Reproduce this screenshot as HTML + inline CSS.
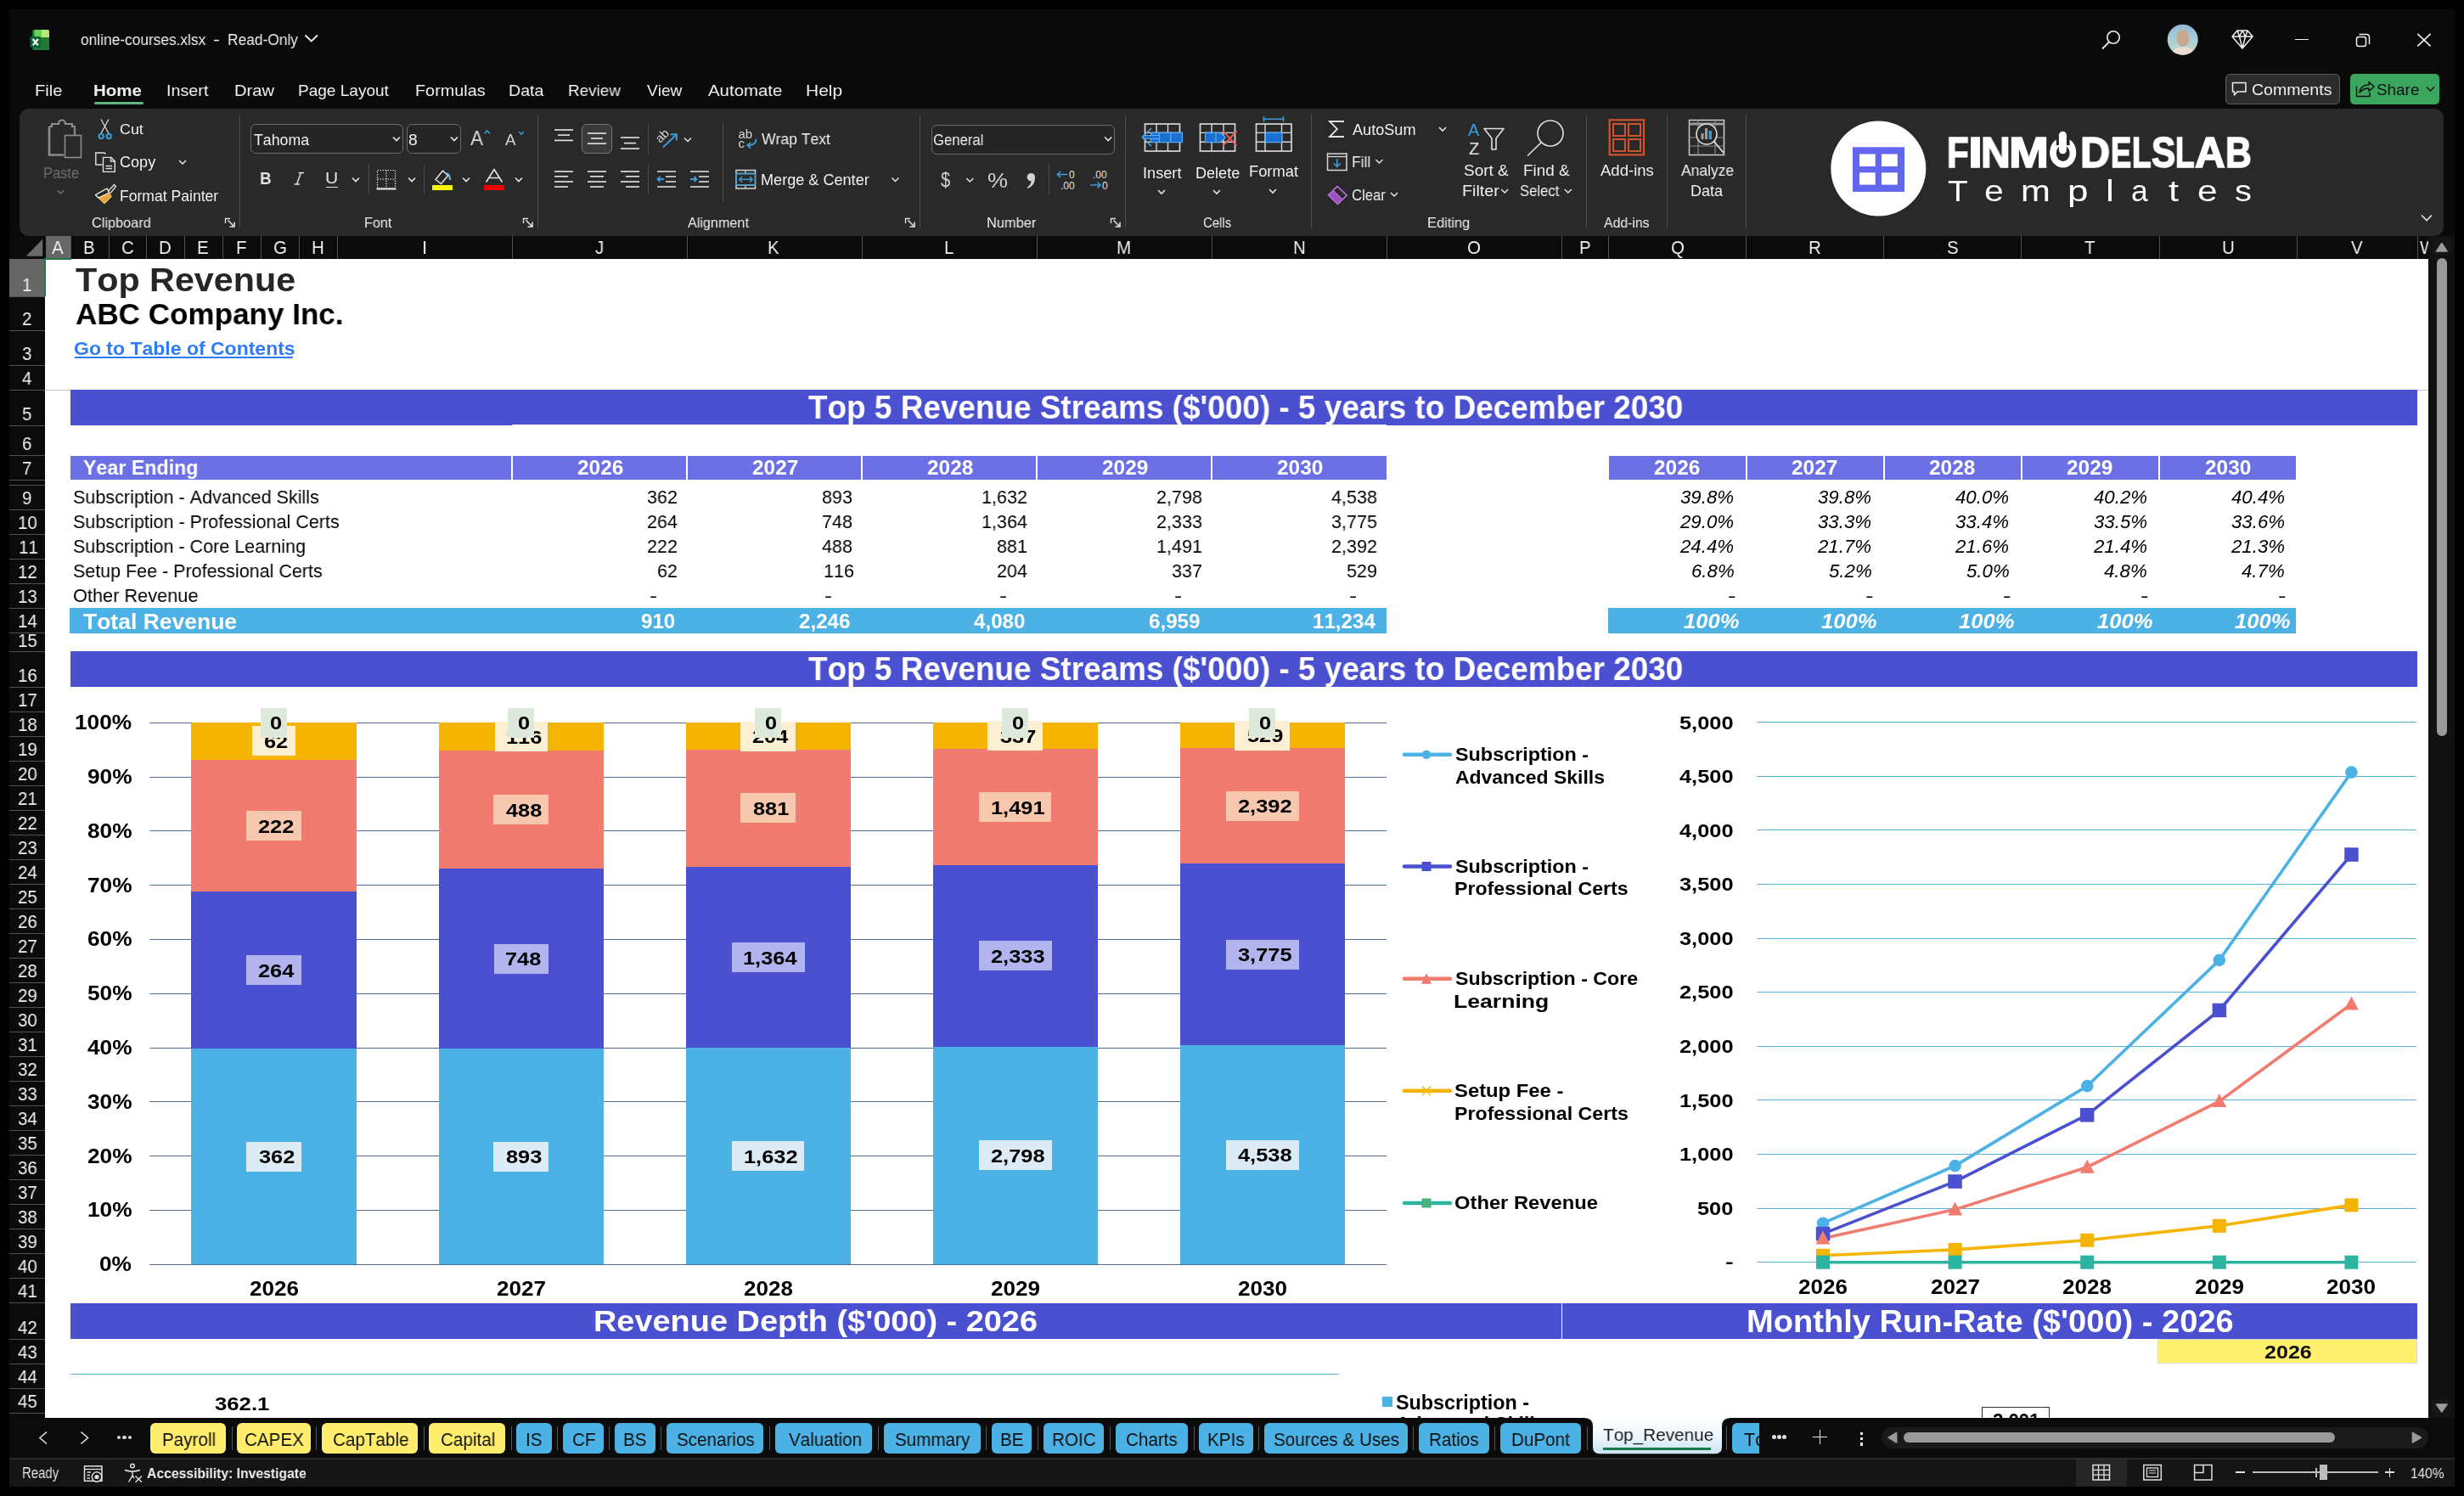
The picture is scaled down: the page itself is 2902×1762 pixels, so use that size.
<!DOCTYPE html>
<html><head><meta charset="utf-8"><style>
html,body{margin:0;padding:0;}
body{width:2902px;height:1762px;overflow:hidden;position:relative;background:#000;font-family:"Liberation Sans",sans-serif;}
.t{position:absolute;white-space:pre;line-height:0;transform-origin:0 0;font-kerning:none;will-change:transform;}
.r{position:absolute;}
.s{position:absolute;overflow:visible;}
</style></head><body>
<div class="r" style="left:11.00px;top:11.00px;width:2880.00px;height:1740.00px;background:#0a0a0a;"></div>
<svg class="s" style="left:33.00px;top:33.00px;" width="28.00" height="28.00" viewBox="33.00 33.00 28.00 28.00">
      <rect x="38" y="35" width="20" height="24" rx="2.5" fill="#1f7a35"/>
      <path d="M40.5 35 H55.5 Q58 35 58 37.5 V44 H40.5 Z" fill="#6ad058"/>
      <path d="M49 35 H55.5 Q58 35 58 37.5 V44 H49 Z" fill="#b9e674"/>
      <rect x="49" y="44" width="9" height="15" fill="#207a32"/>
      <rect x="35.5" y="43" width="12.5" height="13" rx="1.5" fill="#0f6236"/>
      <path d="M38.6 46 L44.9 53.4 M44.9 46 L38.6 53.4" stroke="#fff" stroke-width="2.2"/>
    </svg>
<div class="t" style="left:94.91px;top:46.95px;font-size:18.90px;color:#f0f0f0;transform:scaleX(0.9164);">online-courses.xlsx</div>
<div class="t" style="left:251.43px;top:47.26px;font-size:18.00px;color:#f0f0f0;transform:scaleX(1.3152);">-</div>
<div class="t" style="left:268.11px;top:46.95px;font-size:18.90px;color:#f0f0f0;transform:scaleX(0.9177);">Read-Only</div>
<svg class="s" style="left:355.00px;top:36.00px;" width="23.00" height="16.00" viewBox="355.00 36.00 23.00 16.00"><path d="M359.5 41.5 L366.7 48.5 L374 41.5" fill="none" stroke="#f0f0f0" stroke-width="1.8"/></svg>
<svg class="s" style="left:2470.00px;top:30.00px;" width="30.00" height="32.00" viewBox="2470.00 30.00 30.00 32.00"><circle cx="2489" cy="44" r="7.2" fill="none" stroke="#f0f0f0" stroke-width="1.6"/><path d="M2484 49.3 L2476 57.5" stroke="#f0f0f0" stroke-width="1.8"/></svg>
<svg class="s" style="left:2550.00px;top:26.00px;" width="42.00" height="42.00" viewBox="2550.00 26.00 42.00 42.00">
      <defs><clipPath id="av"><circle cx="2570.7" cy="46.7" r="18"/></clipPath>
      <linearGradient id="avg" x1="0" y1="0" x2="0" y2="1"><stop offset="0" stop-color="#8fb2d8"/><stop offset="0.5" stop-color="#a9cfd6"/><stop offset="1" stop-color="#c9d8d2"/></linearGradient></defs>
      <g clip-path="url(#av)">
        <rect x="2550" y="26" width="42" height="42" fill="url(#avg)"/>
        <ellipse cx="2571" cy="45" rx="7.5" ry="10" fill="#c9a890"/>
        <path d="M2556 68 Q2558 55 2571 55 Q2584 55 2586 68 Z" fill="#e8ddd0"/>
      </g></svg>
<svg class="s" style="left:2626.00px;top:32.00px;" width="30.00" height="28.00" viewBox="2626.00 32.00 30.00 28.00"><path d="M2635 36 H2647 L2653 43 L2641 57 L2629 43 Z M2629 43 H2653 M2637.5 43 L2641 57 L2644.5 43 M2635 36 L2637.5 43 L2641 36 L2644.5 43 L2647 36" fill="none" stroke="#f0f0f0" stroke-width="1.5" stroke-linejoin="round"/></svg>
<div class="r" style="left:2703.00px;top:45.50px;width:16.00px;height:1.70px;background:#f0f0f0;"></div>
<svg class="s" style="left:2770.00px;top:36.00px;" width="26.00" height="24.00" viewBox="2770.00 36.00 26.00 24.00"><rect x="2775.5" y="43.5" width="11" height="11" rx="2.5" fill="none" stroke="#f0f0f0" stroke-width="1.5"/><path d="M2778.5 40.5 H2787 Q2790.5 40.5 2790.5 44 V52" fill="none" stroke="#f0f0f0" stroke-width="1.5"/></svg>
<svg class="s" style="left:2842.00px;top:34.00px;" width="26.00" height="26.00" viewBox="2842.00 34.00 26.00 26.00"><path d="M2847.3 39.8 L2862.6 54.4 M2862.6 39.8 L2847.3 54.4" stroke="#f0f0f0" stroke-width="1.6"/></svg>
<div class="t" style="left:40.58px;top:107.00px;font-size:19.04px;color:#f0f0f0;transform:scaleX(1.0610);">File</div>
<div class="t" style="left:110.27px;top:107.00px;font-size:19.04px;color:#f0f0f0;font-weight:bold;transform:scaleX(1.0759);">Home</div>
<div class="t" style="left:196.22px;top:107.00px;font-size:19.04px;color:#f0f0f0;transform:scaleX(1.0373);">Insert</div>
<div class="t" style="left:275.59px;top:107.00px;font-size:19.04px;color:#f0f0f0;transform:scaleX(1.0574);">Draw</div>
<div class="t" style="left:351.47px;top:107.00px;font-size:19.04px;color:#f0f0f0;">Page Layout</div>
<div class="t" style="left:489.41px;top:107.00px;font-size:19.04px;color:#f0f0f0;transform:scaleX(1.0413);">Formulas</div>
<div class="t" style="left:599.03px;top:107.00px;font-size:19.04px;color:#f0f0f0;transform:scaleX(1.0297);">Data</div>
<div class="t" style="left:669.39px;top:107.00px;font-size:19.04px;color:#f0f0f0;transform:scaleX(0.9913);">Review</div>
<div class="t" style="left:761.70px;top:107.00px;font-size:19.04px;color:#f0f0f0;transform:scaleX(1.0038);">View</div>
<div class="t" style="left:834.00px;top:107.00px;font-size:19.04px;color:#f0f0f0;transform:scaleX(1.0727);">Automate</div>
<div class="t" style="left:949.22px;top:107.00px;font-size:19.04px;color:#f0f0f0;transform:scaleX(1.1019);">Help</div>
<div class="r" style="left:111.00px;top:120.30px;width:58.00px;height:2.70px;background:#5cb883;border-radius:1.5px;"></div>
<div class="r" style="left:2621.00px;top:87.20px;width:134.50px;height:35.50px;background:#2c2c2c;border-radius:5px;box-sizing:border-box;border:1px solid #5c5c5c;"></div>
<svg class="s" style="left:2626.00px;top:92.00px;" width="24.00" height="26.00" viewBox="2626.00 92.00 24.00 26.00"><path d="M2629.5 97.5 H2645 V108 H2635 L2631.5 112 V108 H2629.5 Z" fill="none" stroke="#f0f0f0" stroke-width="1.5" stroke-linejoin="round"/></svg>
<div class="t" style="left:2651.72px;top:105.65px;font-size:18.90px;color:#f0f0f0;transform:scaleX(1.0339);">Comments</div>
<div class="r" style="left:2768.00px;top:87.20px;width:105.00px;height:35.50px;background:#3aa65e;border-radius:5px;"></div>
<svg class="s" style="left:2772.00px;top:92.00px;" width="28.00" height="26.00" viewBox="2772.00 92.00 28.00 26.00"><path d="M2775.5 101.5 V113.5 H2791 V109" fill="none" stroke="#111" stroke-width="1.5"/><path d="M2779 109 Q2780 100 2790 100 V96.5 L2796 102 L2790 107.5 V104 Q2783 104 2779 109 Z" fill="none" stroke="#111" stroke-width="1.5" stroke-linejoin="round"/></svg>
<div class="t" style="left:2798.65px;top:105.65px;font-size:18.90px;color:#111;transform:scaleX(0.9968);">Share</div>
<svg class="s" style="left:2855.00px;top:98.00px;" width="16.00" height="14.00" viewBox="2855.00 98.00 16.00 14.00"><path d="M2858 102.5 L2862.5 107 L2867 102.5" fill="none" stroke="#111" stroke-width="1.5"/></svg>
<div class="r" style="left:23.00px;top:128.00px;width:2855.00px;height:150.20px;background:#292929;border-radius:11px;"></div>
<div class="r" style="left:281.90px;top:135.00px;width:1.20px;height:132.50px;background:#4d4d4d;"></div>
<div class="r" style="left:633.20px;top:135.00px;width:1.20px;height:133.00px;background:#4d4d4d;"></div>
<div class="r" style="left:1082.50px;top:135.70px;width:1.20px;height:132.30px;background:#4d4d4d;"></div>
<div class="r" style="left:1325.00px;top:135.00px;width:1.20px;height:133.00px;background:#4d4d4d;"></div>
<div class="r" style="left:1544.10px;top:135.00px;width:1.20px;height:133.00px;background:#4d4d4d;"></div>
<div class="r" style="left:1868.20px;top:135.00px;width:1.20px;height:133.00px;background:#4d4d4d;"></div>
<div class="r" style="left:1962.90px;top:135.00px;width:1.20px;height:133.00px;background:#4d4d4d;"></div>
<div class="r" style="left:2056.00px;top:135.00px;width:1.20px;height:133.00px;background:#4d4d4d;"></div>
<div class="r" style="left:433.50px;top:194.00px;width:1.10px;height:35.00px;background:#4d4d4d;"></div>
<div class="r" style="left:498.90px;top:194.00px;width:1.10px;height:35.00px;background:#4d4d4d;"></div>
<div class="r" style="left:763.00px;top:146.00px;width:1.10px;height:35.50px;background:#4d4d4d;"></div>
<div class="r" style="left:763.00px;top:194.00px;width:1.10px;height:35.00px;background:#4d4d4d;"></div>
<div class="r" style="left:850.70px;top:144.00px;width:1.10px;height:93.80px;background:#4d4d4d;"></div>
<div class="r" style="left:1235.00px;top:193.00px;width:1.10px;height:37.00px;background:#4d4d4d;"></div>
<div class="t" style="left:108.48px;top:263.20px;font-size:16.72px;color:#f0f0f0;transform:scaleX(0.9753);">Clipboard</div>
<div class="t" style="left:428.70px;top:263.20px;font-size:16.72px;color:#f0f0f0;transform:scaleX(0.9684);">Font</div>
<div class="t" style="left:810.00px;top:263.20px;font-size:16.72px;color:#f0f0f0;transform:scaleX(0.9674);">Alignment</div>
<div class="t" style="left:1162.08px;top:263.20px;font-size:16.72px;color:#f0f0f0;transform:scaleX(0.9838);">Number</div>
<div class="t" style="left:1417.25px;top:263.20px;font-size:16.72px;color:#f0f0f0;transform:scaleX(0.8946);">Cells</div>
<div class="t" style="left:1681.09px;top:263.20px;font-size:16.72px;color:#f0f0f0;transform:scaleX(0.9827);">Editing</div>
<div class="t" style="left:1888.50px;top:263.20px;font-size:16.72px;color:#f0f0f0;transform:scaleX(0.9451);">Add-ins</div>
<svg class="s" style="left:264.00px;top:256.00px;" width="14.00" height="14.00" viewBox="264.00 256.00 14.00 14.00"><path d="M265.5 263 V257.5 H271.0" fill="none" stroke="#e0e0e0" stroke-width="1.4"/><path d="M268.5 259.5 L276.0 267 M270.5 267 H276.0 V261.5" fill="none" stroke="#e0e0e0" stroke-width="1.6"/></svg>
<svg class="s" style="left:615.00px;top:256.00px;" width="14.00" height="14.00" viewBox="615.00 256.00 14.00 14.00"><path d="M616.5 263 V257.5 H622.0" fill="none" stroke="#e0e0e0" stroke-width="1.4"/><path d="M619.5 259.5 L627.0 267 M621.5 267 H627.0 V261.5" fill="none" stroke="#e0e0e0" stroke-width="1.6"/></svg>
<svg class="s" style="left:1065.00px;top:256.00px;" width="14.00" height="14.00" viewBox="1065.00 256.00 14.00 14.00"><path d="M1066.5 263 V257.5 H1072.0" fill="none" stroke="#e0e0e0" stroke-width="1.4"/><path d="M1069.5 259.5 L1077.0 267 M1071.5 267 H1077.0 V261.5" fill="none" stroke="#e0e0e0" stroke-width="1.6"/></svg>
<svg class="s" style="left:1307.00px;top:256.00px;" width="14.00" height="14.00" viewBox="1307.00 256.00 14.00 14.00"><path d="M1308.5 263 V257.5 H1314.0" fill="none" stroke="#e0e0e0" stroke-width="1.4"/><path d="M1311.5 259.5 L1319.0 267 M1313.5 267 H1319.0 V261.5" fill="none" stroke="#e0e0e0" stroke-width="1.6"/></svg>
<svg class="s" style="left:50.00px;top:136.00px;" width="50.00" height="54.00" viewBox="50.00 136.00 50.00 54.00">
      <path d="M58 149 H61 V146 H69 Q69 141.5 73 141.5 Q77 141.5 77 146 H85 V149 H88 V160" fill="none" stroke="#8c8c8c" stroke-width="2.2"/>
      <path d="M58 149 V182.5 H75" fill="none" stroke="#8c8c8c" stroke-width="2.6"/>
      <rect x="76.5" y="159.5" width="19" height="26" fill="none" stroke="#8c8c8c" stroke-width="1.6"/></svg>
<div class="t" style="left:50.98px;top:203.85px;font-size:17.44px;color:#707070;transform:scaleX(0.9437);">Paste</div>
<svg class="s" style="left:64.00px;top:221.00px;" width="16.00" height="11.00" viewBox="64.00 221.00 16.00 11.00"><path d="M67.5 224 L71.5 228 L75.5 224" fill="none" stroke="#707070" stroke-width="1.5"/></svg>
<svg class="s" style="left:112.00px;top:138.00px;" width="24.00" height="28.00" viewBox="112.00 138.00 24.00 28.00"><path d="M119 140.5 L128.5 158 M128 140.5 L118.5 158" stroke="#e6e6e6" stroke-width="1.2"/>
      <circle cx="119.2" cy="160.5" r="2.7" fill="none" stroke="#3c9ad8" stroke-width="2"/><circle cx="128.2" cy="160.5" r="2.7" fill="none" stroke="#3c9ad8" stroke-width="2"/></svg>
<div class="t" style="left:141.31px;top:153.10px;font-size:17.01px;color:#f0f0f0;transform:scaleX(1.0506);">Cut</div>
<svg class="s" style="left:110.00px;top:177.00px;" width="28.00" height="28.00" viewBox="110.00 177.00 28.00 28.00"><path d="M120.5 194 H112.8 V180 H123 L124.5 181.5" fill="none" stroke="#e0e0e0" stroke-width="1.4"/>
      <path d="M121.5 202.4 V185.4 H131 L135.3 189.7 V202.4 Z M130.5 185.4 V190 H135.3" fill="none" stroke="#e0e0e0" stroke-width="1.4"/>
      <path d="M124.5 195.5 H132 M124.5 198.5 H132" stroke="#e0e0e0" stroke-width="1.3"/></svg>
<div class="t" style="left:141.30px;top:191.25px;font-size:17.44px;color:#f0f0f0;transform:scaleX(1.0362);">Copy</div>
<svg class="s" style="left:208.00px;top:185.00px;" width="14.00" height="12.00" viewBox="208.00 185.00 14.00 12.00"><path d="M211 189 L215 193 L219 189" fill="none" stroke="#e6e6e6" stroke-width="1.5"/></svg>
<svg class="s" style="left:110.00px;top:215.00px;" width="30.00" height="28.00" viewBox="110.00 215.00 30.00 28.00"><path d="M112.5 229.5 L126 222 L131 231.5 L123 239.5 Z" fill="#e9a43a" stroke="#f0c060" stroke-width="1.3" stroke-linejoin="round"/>
      <path d="M112.5 229.5 L126 222 L128.5 227 L116 233 Z" fill="#292929" stroke="#f0f0f0" stroke-width="1.3" stroke-linejoin="round"/>
      <path d="M127.5 225 L134.5 217.5 L136.5 219.5 L130 227.5" fill="none" stroke="#e0e0e0" stroke-width="1.3"/></svg>
<div class="t" style="left:141.29px;top:230.75px;font-size:17.44px;color:#f0f0f0;transform:scaleX(1.0076);">Format Painter</div>
<div class="r" style="left:295.30px;top:146.20px;width:179.90px;height:34.90px;background:#252525;border-radius:6px;box-sizing:border-box;border:1px solid #6a6a6a;"></div>
<div class="t" style="left:298.65px;top:165.15px;font-size:17.73px;color:#f0f0f0;">Tahoma</div>
<div class="r" style="left:479.00px;top:146.20px;width:64.00px;height:34.90px;background:#252525;border-radius:6px;box-sizing:border-box;border:1px solid #6a6a6a;"></div>
<div class="t" style="left:481.14px;top:165.15px;font-size:17.73px;color:#f0f0f0;transform:scaleX(1.0799);">8</div>
<svg class="s" style="left:460.30px;top:158.00px;" width="14.00" height="12.00" viewBox="460.30 158.00 14.00 12.00"><path d="M463.3 161.5 L467.3 165.5 L471.3 161.5" fill="none" stroke="#e6e6e6" stroke-width="1.6"/></svg>
<svg class="s" style="left:528.00px;top:158.00px;" width="14.00" height="12.00" viewBox="528.00 158.00 14.00 12.00"><path d="M531.0 161.5 L535.0 165.5 L539.0 161.5" fill="none" stroke="#e6e6e6" stroke-width="1.6"/></svg>
<div class="t" style="left:554.40px;top:162.99px;font-size:23.98px;color:#d8d8d8;transform:scaleX(0.9468);">A</div>
<svg class="s" style="left:568.00px;top:152.00px;" width="12.00" height="8.00" viewBox="568.00 152.00 12.00 8.00"><path d="M570.5 157.5 L573.8 154 L577 157.5" fill="none" stroke="#3c9ad8" stroke-width="1.6"/></svg>
<div class="t" style="left:595.00px;top:165.20px;font-size:18.17px;color:#d8d8d8;transform:scaleX(1.0346);">A</div>
<svg class="s" style="left:609.00px;top:153.00px;" width="11.00" height="7.00" viewBox="609.00 153.00 11.00 7.00"><path d="M611 155 L614 158 L617 155" fill="none" stroke="#3c9ad8" stroke-width="1.6"/></svg>
<div class="t" style="left:306.27px;top:210.39px;font-size:20.79px;color:#e0e0e0;font-weight:bold;transform:scaleX(0.9070);">B</div>
<svg class="s" style="left:344.00px;top:200.00px;" width="18.00" height="20.00" viewBox="344.00 200.00 18.00 20.00"><path d="M354.5 203.5 L349.5 217 M351.5 203.5 H358 M346.5 217 H353" fill="none" stroke="#e0e0e0" stroke-width="1.5"/></svg>
<div class="t" style="left:382.92px;top:209.55px;font-size:18.60px;color:#e0e0e0;transform:scaleX(1.1316);">U</div>
<div class="r" style="left:383.50px;top:219.50px;width:14.00px;height:1.70px;background:#e0e0e0;"></div>
<svg class="s" style="left:412.20px;top:206.00px;" width="14.00" height="12.00" viewBox="412.20 206.00 14.00 12.00"><path d="M415.2 209.5 L419.2 213.5 L423.2 209.5" fill="none" stroke="#e6e6e6" stroke-width="1.6"/></svg>
<svg class="s" style="left:477.50px;top:206.00px;" width="14.00" height="12.00" viewBox="477.50 206.00 14.00 12.00"><path d="M480.5 209.5 L484.5 213.5 L488.5 209.5" fill="none" stroke="#e6e6e6" stroke-width="1.6"/></svg>
<svg class="s" style="left:542.00px;top:206.00px;" width="14.00" height="12.00" viewBox="542.00 206.00 14.00 12.00"><path d="M545.0 209.5 L549.0 213.5 L553.0 209.5" fill="none" stroke="#e6e6e6" stroke-width="1.6"/></svg>
<svg class="s" style="left:603.70px;top:206.00px;" width="14.00" height="12.00" viewBox="603.70 206.00 14.00 12.00"><path d="M606.7 209.5 L610.7 213.5 L614.7 209.5" fill="none" stroke="#e6e6e6" stroke-width="1.6"/></svg>
<svg class="s" style="left:440.00px;top:197.00px;" width="30.00" height="29.00" viewBox="440.00 197.00 30.00 29.00"><rect x="444.5" y="200.5" width="21" height="21" fill="none" stroke="#e0e0e0" stroke-width="1.2" stroke-dasharray="1.5 1.5"/><path d="M444.5 211 H465.5 M455 200.5 V221.5" stroke="#e0e0e0" stroke-width="1.2" stroke-dasharray="1.5 1.5"/><path d="M443.5 222.5 H466.5" stroke="#e6e6e6" stroke-width="2"/></svg>
<svg class="s" style="left:505.00px;top:197.00px;" width="32.00" height="29.00" viewBox="505.00 197.00 32.00 29.00"><path d="M513 211.5 L521.5 201 L527.5 207 L519.5 216.5 Z" fill="none" stroke="#e0e0e0" stroke-width="1.5" stroke-linejoin="round"/><path d="M524 204 Q530 204 530 212" fill="none" stroke="#7eb6e6" stroke-width="2"/></svg>
<div class="r" style="left:509.00px;top:217.80px;width:24.00px;height:5.90px;background:#f5f500;"></div>
<svg class="s" style="left:566.00px;top:196.00px;" width="32.00" height="22.00" viewBox="566.00 196.00 32.00 22.00"><path d="M572.5 214.5 L582 199.5 L591.5 214.5 M575.5 209.5 H588.5" fill="none" stroke="#e0e0e0" stroke-width="1.6" stroke-linejoin="round"/></svg>
<div class="r" style="left:569.80px;top:217.80px;width:24.20px;height:5.90px;background:#ee0000;"></div>
<svg class="s" style="left:648.00px;top:149.50px;" width="42.00" height="18.40" viewBox="648.00 149.50 42.00 18.40"><path d="M653.0 152.5 H675.0" stroke="#e6e6e6" stroke-width="1.6"/><path d="M657.0 158.6 H671.0" stroke="#e6e6e6" stroke-width="1.6"/><path d="M653.0 164.9 H675.0" stroke="#e6e6e6" stroke-width="1.6"/></svg>
<div class="r" style="left:685.30px;top:146.20px;width:35.30px;height:35.30px;background:#3a3a3a;border-radius:6px;box-sizing:border-box;border:1px solid #777;"></div>
<svg class="s" style="left:688.00px;top:154.00px;" width="42.00" height="18.10" viewBox="688.00 154.00 42.00 18.10"><path d="M692.0 157.0 H714.0" stroke="#e6e6e6" stroke-width="1.6"/><path d="M696.0 163.0 H710.0" stroke="#e6e6e6" stroke-width="1.6"/><path d="M692.0 169.1 H714.0" stroke="#e6e6e6" stroke-width="1.6"/></svg>
<svg class="s" style="left:727.00px;top:159.40px;" width="42.00" height="19.00" viewBox="727.00 159.40 42.00 19.00"><path d="M731.0 162.4 H753.0" stroke="#e6e6e6" stroke-width="1.6"/><path d="M735.0 169.0 H749.0" stroke="#e6e6e6" stroke-width="1.6"/><path d="M731.0 175.4 H753.0" stroke="#e6e6e6" stroke-width="1.6"/></svg>
<svg class="s" style="left:648.00px;top:199.00px;" width="42.00" height="24.00" viewBox="648.00 199.00 42.00 24.00"><path d="M653.0 202.0 H675.0" stroke="#e6e6e6" stroke-width="1.6"/><path d="M653.0 207.8 H669.0" stroke="#e6e6e6" stroke-width="1.6"/><path d="M653.0 214.0 H675.0" stroke="#e6e6e6" stroke-width="1.6"/><path d="M653.0 220.0 H669.0" stroke="#e6e6e6" stroke-width="1.6"/></svg>
<svg class="s" style="left:687.00px;top:199.00px;" width="42.00" height="24.00" viewBox="687.00 199.00 42.00 24.00"><path d="M692.0 202.0 H714.0" stroke="#e6e6e6" stroke-width="1.6"/><path d="M695.0 207.8 H711.0" stroke="#e6e6e6" stroke-width="1.6"/><path d="M692.0 214.0 H714.0" stroke="#e6e6e6" stroke-width="1.6"/><path d="M695.0 220.0 H711.0" stroke="#e6e6e6" stroke-width="1.6"/></svg>
<svg class="s" style="left:727.00px;top:199.00px;" width="42.00" height="24.00" viewBox="727.00 199.00 42.00 24.00"><path d="M731.0 202.0 H753.0" stroke="#e6e6e6" stroke-width="1.6"/><path d="M737.0 207.8 H753.0" stroke="#e6e6e6" stroke-width="1.6"/><path d="M731.0 214.0 H753.0" stroke="#e6e6e6" stroke-width="1.6"/><path d="M737.0 220.0 H753.0" stroke="#e6e6e6" stroke-width="1.6"/></svg>
<svg class="s" style="left:770.00px;top:196.00px;" width="62.00" height="30.00" viewBox="770.00 196.00 62.00 30.00"><path d="M774 202 H796 M784 208 H796 M784 214 H796 M774 220 H796" stroke="#e6e6e6" stroke-width="1.6"/>
      <path d="M782 211 H774.5 M777.5 208 L774.5 211 L777.5 214" fill="none" stroke="#3c9ad8" stroke-width="1.8"/>
      <path d="M813 202 H835 M823 208 H835 M823 214 H835 M813 220 H835" stroke="#e6e6e6" stroke-width="1.6"/>
      <path d="M813 211 H820.5 M817.5 208 L820.5 211 L817.5 214" fill="none" stroke="#3c9ad8" stroke-width="1.8"/></svg>
<svg class="s" style="left:766.00px;top:144.00px;" width="54.00" height="38.00" viewBox="766.00 144.00 54.00 38.00"><text x="771" y="163.5" font-size="14.5" fill="#d8d8d8" transform="rotate(-45 781 158.5)" font-family="Liberation Sans">ab</text>
      <path d="M781 173.5 L796.5 158.5 M789.5 158.3 H796.8 V165.5" fill="none" stroke="#3c9ad8" stroke-width="1.9"/>
      <path d="M806 162.5 L810 166.5 L814 162.5" fill="none" stroke="#e6e6e6" stroke-width="1.5"/></svg>
<svg class="s" style="left:864.00px;top:146.00px;" width="32.00" height="34.00" viewBox="864.00 146.00 32.00 34.00"><text x="869.5" y="163.3" font-size="15" fill="#d8d8d8" font-family="Liberation Sans">ab</text>
      <text x="869.5" y="174.3" font-size="15" fill="#d8d8d8" font-family="Liberation Sans">c</text>
      <path d="M890.5 163.5 Q891 171.2 880.5 171.2 M884 167.8 L880.2 171.2 L884 174.6" fill="none" stroke="#3c9ad8" stroke-width="1.8"/></svg>
<div class="t" style="left:896.91px;top:164.35px;font-size:18.02px;color:#f0f0f0;transform:scaleX(0.9750);">Wrap Text</div>
<svg class="s" style="left:864.00px;top:198.00px;" width="28.00" height="27.00" viewBox="864.00 198.00 28.00 27.00"><rect x="867" y="200.5" width="22.5" height="21.5" fill="none" stroke="#d8d8d8" stroke-width="1.5"/>
      <path d="M867 204.5 H889.5 M867 218 H889.5 M878 200.5 V204.5 M878 218 V222" stroke="#d8d8d8" stroke-width="1.3"/>
      <rect x="867" y="204.5" width="22.5" height="13.5" fill="none" stroke="#3c9ad8" stroke-width="1.5"/>
      <path d="M871 211.2 H886 M874 208 L871 211.2 L874 214.5 M883 208 L886 211.2 L883 214.5" fill="none" stroke="#3c9ad8" stroke-width="1.6"/></svg>
<div class="t" style="left:895.55px;top:212.45px;font-size:18.02px;color:#f0f0f0;transform:scaleX(1.0044);">Merge &amp; Center</div>
<svg class="s" style="left:1047.00px;top:206.00px;" width="14.00" height="12.00" viewBox="1047.00 206.00 14.00 12.00"><path d="M1050.4 209.5 L1054.4 213.5 L1058.4 209.5" fill="none" stroke="#e6e6e6" stroke-width="1.5"/></svg>
<div class="r" style="left:1096.60px;top:146.60px;width:216.80px;height:35.00px;background:#252525;border-radius:6px;box-sizing:border-box;border:1px solid #6a6a6a;"></div>
<div class="t" style="left:1099.16px;top:165.25px;font-size:18.02px;color:#f0f0f0;transform:scaleX(0.9274);">General</div>
<svg class="s" style="left:1298.00px;top:158.00px;" width="14.00" height="12.00" viewBox="1298.00 158.00 14.00 12.00"><path d="M1301.2 161.5 L1305.2 165.5 L1309.2 161.5" fill="none" stroke="#e6e6e6" stroke-width="1.6"/></svg>
<div class="t" style="left:1107.60px;top:212.19px;font-size:23.98px;color:#d0d0d0;transform:scaleX(0.8418);">$</div>
<svg class="s" style="left:1135.00px;top:206.00px;" width="15.00" height="12.00" viewBox="1135.00 206.00 15.00 12.00"><path d="M1138.3 210 L1142.3 214 L1146.3 210" fill="none" stroke="#e6e6e6" stroke-width="1.5"/></svg>
<div class="t" style="left:1162.85px;top:212.69px;font-size:23.98px;color:#d0d0d0;transform:scaleX(1.1288);">%</div>
<svg class="s" style="left:1204.00px;top:198.00px;" width="22.00" height="28.00" viewBox="1204.00 198.00 22.00 28.00"><circle cx="1214.3" cy="208.6" r="4.7" fill="#d4d4d4"/><path d="M1218.9 209.2 Q1219.2 218.5 1210.2 222 L1209.6 220.8 Q1214.6 217.5 1214.6 212.8 Z" fill="#d4d4d4"/></svg>
<svg class="s" style="left:1240.00px;top:196.00px;" width="72.00" height="32.00" viewBox="1240.00 196.00 72.00 32.00"><text x="1259" y="210" font-size="12" fill="#e0e0e0" font-family="Liberation Sans">0</text>
      <text x="1249" y="222.5" font-size="12" fill="#e0e0e0" font-family="Liberation Sans">.00</text>
      <path d="M1257 205.5 H1245.5 M1249 202 L1245.5 205.5 L1249 209" fill="none" stroke="#3c9ad8" stroke-width="1.6"/>
      <text x="1287" y="210" font-size="12" fill="#e0e0e0" font-family="Liberation Sans">.00</text>
      <text x="1298" y="222.5" font-size="12" fill="#e0e0e0" font-family="Liberation Sans">0</text>
      <path d="M1284 218 H1296 M1292.5 214.5 L1296 218 L1292.5 221.5" fill="none" stroke="#3c9ad8" stroke-width="1.6"/></svg>
<svg class="s" style="left:1340.00px;top:134.00px;" width="190.00" height="48.00" viewBox="1340.00 134.00 190.00 48.00"><rect x="1348.5" y="146.0" width="41.0" height="32.0" fill="none" stroke="#d8d8d8" stroke-width="1.7"/><path d="M1362.0 146.0 V178.0" stroke="#d8d8d8" stroke-width="1.4"/><path d="M1375.5 146.0 V178.0" stroke="#d8d8d8" stroke-width="1.4"/><path d="M1348.5 156.4 H1389.5" stroke="#d8d8d8" stroke-width="1.4"/><path d="M1348.5 167.3 H1389.5" stroke="#d8d8d8" stroke-width="1.4"/><rect x="1355.5" y="156.2" width="37" height="11.4" fill="#1a6fd0" stroke="#5aaef0" stroke-width="1.2"/><path d="M1365.4 156.2 V167.6 M1378.8 156.2 V167.6" stroke="#5aaef0" stroke-width="1.2"/><path d="M1356 151 L1345.3 161.5 L1356 172 M1346 159.6 H1365 M1346 163.4 H1365" fill="none" stroke="#5aaef0" stroke-width="1.4"/><path d="M1348 161.5 H1365" stroke="#1a6fd0" stroke-width="2.6"/><rect x="1413.5" y="146.0" width="41.0" height="32.0" fill="none" stroke="#d8d8d8" stroke-width="1.7"/><path d="M1427.0 146.0 V178.0" stroke="#d8d8d8" stroke-width="1.4"/><path d="M1441.0 146.0 V178.0" stroke="#d8d8d8" stroke-width="1.4"/><path d="M1413.5 156.4 H1454.5" stroke="#d8d8d8" stroke-width="1.4"/><path d="M1413.5 167.3 H1454.5" stroke="#d8d8d8" stroke-width="1.4"/><path d="M1419.5 156.2 H1437 L1443.5 161.9 L1437 167.6 H1419.5 Z" fill="#1a6fd0" stroke="#5aaef0" stroke-width="1.2"/><path d="M1432 156.2 V167.6" stroke="#5aaef0" stroke-width="1.2"/><path d="M1440.5 154.5 L1456.5 171.5 M1456.5 154.5 L1440.5 171.5" stroke="#e85a5a" stroke-width="2"/><rect x="1479.5" y="146.0" width="41.5" height="32.0" fill="none" stroke="#d8d8d8" stroke-width="1.7"/><path d="M1490.0 146.0 V178.0" stroke="#d8d8d8" stroke-width="1.4"/><path d="M1509.5 146.0 V178.0" stroke="#d8d8d8" stroke-width="1.4"/><path d="M1479.5 156.4 H1521.0" stroke="#d8d8d8" stroke-width="1.4"/><path d="M1479.5 167.3 H1521.0" stroke="#d8d8d8" stroke-width="1.4"/><rect x="1490.5" y="156.2" width="19.5" height="11.4" fill="#1a6fd0" stroke="#5aaef0" stroke-width="1.2"/><path d="M1488.5 140.2 H1511.5 M1488.5 137 V143.5 M1511.5 137 V143.5" stroke="#3c9ad8" stroke-width="1.6"/></svg>
<div class="t" style="left:1345.66px;top:203.75px;font-size:18.02px;color:#f0f0f0;transform:scaleX(1.0082);">Insert</div>
<div class="t" style="left:1407.55px;top:203.75px;font-size:18.02px;color:#f0f0f0;transform:scaleX(1.0033);">Delete</div>
<div class="t" style="left:1471.14px;top:201.75px;font-size:18.02px;color:#f0f0f0;transform:scaleX(1.0160);">Format</div>
<svg class="s" style="left:1361.30px;top:220.40px;" width="14.00" height="12.00" viewBox="1361.30 220.40 14.00 12.00"><path d="M1364.3 224.4 L1368.3 228.4 L1372.3 224.4" fill="none" stroke="#e6e6e6" stroke-width="1.6"/></svg>
<svg class="s" style="left:1426.00px;top:220.40px;" width="14.00" height="12.00" viewBox="1426.00 220.40 14.00 12.00"><path d="M1429.0 224.4 L1433.0 228.4 L1437.0 224.4" fill="none" stroke="#e6e6e6" stroke-width="1.6"/></svg>
<svg class="s" style="left:1492.20px;top:218.50px;" width="14.00" height="12.00" viewBox="1492.20 218.50 14.00 12.00"><path d="M1495.2 222.5 L1499.2 226.5 L1503.2 222.5" fill="none" stroke="#e6e6e6" stroke-width="1.6"/></svg>
<svg class="s" style="left:1560.00px;top:138.00px;" width="30.00" height="28.00" viewBox="1560.00 138.00 30.00 28.00"><path d="M1583 143 H1566 L1575 152 L1566 161 H1583" fill="none" stroke="#e0e0e0" stroke-width="1.8" stroke-linejoin="miter"/></svg>
<div class="t" style="left:1593.30px;top:152.75px;font-size:18.02px;color:#f0f0f0;transform:scaleX(1.0055);">AutoSum</div>
<svg class="s" style="left:1692.00px;top:146.00px;" width="14.00" height="12.00" viewBox="1692.00 146.00 14.00 12.00"><path d="M1695 150 L1699 154 L1703 150" fill="none" stroke="#e6e6e6" stroke-width="1.6"/></svg>
<svg class="s" style="left:1560.00px;top:177.00px;" width="30.00" height="27.00" viewBox="1560.00 177.00 30.00 27.00"><rect x="1563.5" y="181" width="22.5" height="19.5" fill="none" stroke="#d8d8d8" stroke-width="1.5"/><path d="M1563.5 184.5 H1586" stroke="#d8d8d8" stroke-width="1.3"/><path d="M1574.8 187 V196 M1571 192.5 L1574.8 196.3 L1578.6 192.5" fill="none" stroke="#3c9ad8" stroke-width="1.7"/></svg>
<div class="t" style="left:1591.91px;top:191.25px;font-size:18.02px;color:#f0f0f0;transform:scaleX(0.9673);">Fill</div>
<svg class="s" style="left:1617.00px;top:184.00px;" width="15.00" height="12.00" viewBox="1617.00 184.00 15.00 12.00"><path d="M1620.4 188 L1624.4 192 L1628.4 188" fill="none" stroke="#e6e6e6" stroke-width="1.5"/></svg>
<svg class="s" style="left:1560.00px;top:216.00px;" width="32.00" height="28.00" viewBox="1560.00 216.00 32.00 28.00"><path d="M1575 219.5 L1586 230 L1575.5 240.5 L1564.5 229.8 Z" fill="#9b4fc2" stroke="#c070e0" stroke-width="1.5" stroke-linejoin="round"/><path d="M1570 224.5 L1581 235.2" stroke="#292929" stroke-width="1.2"/><path d="M1575 219.5 L1586 230 L1581 235 L1570 224.5 Z" fill="#292929" stroke="#c070e0" stroke-width="1.5" stroke-linejoin="round"/></svg>
<div class="t" style="left:1592.47px;top:230.05px;font-size:18.02px;color:#f0f0f0;transform:scaleX(0.9255);">Clear</div>
<svg class="s" style="left:1635.00px;top:223.00px;" width="15.00" height="12.00" viewBox="1635.00 223.00 15.00 12.00"><path d="M1638 227 L1642 231 L1646 227" fill="none" stroke="#e6e6e6" stroke-width="1.5"/></svg>
<svg class="s" style="left:1725.00px;top:138.00px;" width="50.00" height="47.00" viewBox="1725.00 138.00 50.00 47.00"><text x="1729" y="160" font-size="20" fill="#3c9ad8" font-family="Liberation Sans">A</text>
      <text x="1730" y="181.5" font-size="20" fill="#e0e0e0" font-family="Liberation Sans">Z</text>
      <path d="M1748 151.5 H1771 L1762 163 V176 H1757 V163 Z" fill="none" stroke="#e0e0e0" stroke-width="1.6" stroke-linejoin="round"/></svg>
<div class="t" style="left:1724.35px;top:200.75px;font-size:18.02px;color:#f0f0f0;transform:scaleX(1.0524);">Sort &amp;</div>
<div class="t" style="left:1722.42px;top:224.95px;font-size:18.02px;color:#f0f0f0;transform:scaleX(1.0966);">Filter</div>
<svg class="s" style="left:1765.00px;top:219.00px;" width="15.00" height="12.00" viewBox="1765.00 219.00 15.00 12.00"><path d="M1768.2 223 L1772.2 227 L1776.2 223" fill="none" stroke="#e6e6e6" stroke-width="1.5"/></svg>
<svg class="s" style="left:1795.00px;top:138.00px;" width="53.00" height="48.00" viewBox="1795.00 138.00 53.00 48.00"><circle cx="1826" cy="157" r="15" fill="none" stroke="#e0e0e0" stroke-width="1.6"/><path d="M1815.5 167.5 L1799 183.5" stroke="#e0e0e0" stroke-width="1.7"/></svg>
<div class="t" style="left:1793.79px;top:200.75px;font-size:18.02px;color:#f0f0f0;transform:scaleX(1.0461);">Find &amp;</div>
<div class="t" style="left:1789.75px;top:224.95px;font-size:18.02px;color:#f0f0f0;transform:scaleX(0.9264);">Select</div>
<svg class="s" style="left:1839.00px;top:219.00px;" width="15.00" height="12.00" viewBox="1839.00 219.00 15.00 12.00"><path d="M1842.8 223 L1846.8 227 L1850.8 223" fill="none" stroke="#e6e6e6" stroke-width="1.5"/></svg>
<svg class="s" style="left:1890.00px;top:136.00px;" width="52.00" height="52.00" viewBox="1890.00 136.00 52.00 52.00"><rect x="1895.7" y="141.3" width="40.3" height="41" fill="none" stroke="#d0532c" stroke-width="2.2"/><rect x="1900" y="146" width="14" height="14" fill="none" stroke="#d0532c" stroke-width="2"/><rect x="1918" y="146" width="14" height="14" fill="none" stroke="#d0532c" stroke-width="2"/><rect x="1900" y="164" width="14" height="14" fill="none" stroke="#d0532c" stroke-width="2"/><rect x="1918" y="164" width="14" height="14" fill="none" stroke="#d0532c" stroke-width="2"/></svg>
<div class="t" style="left:1885.00px;top:200.75px;font-size:18.02px;color:#f0f0f0;transform:scaleX(1.0286);">Add-ins</div>
<svg class="s" style="left:1984.00px;top:136.00px;" width="52.00" height="52.00" viewBox="1984.00 136.00 52.00 52.00"><rect x="1989.5" y="141.5" width="41" height="41" fill="none" stroke="#d0d0d0" stroke-width="1.5"/>
      <path d="M1989.5 146 H2030.5" stroke="#9a9a9a" stroke-width="3"/>
      <path d="M1989.5 162 H2030.5 M1989.5 172 H2030.5 M2000 141.5 V182.5 M2020 141.5 V182.5" stroke="#8a8a8a" stroke-width="1.2"/>
      <circle cx="2010" cy="158" r="12" fill="#292929" stroke="#e0e0e0" stroke-width="1.6"/>
      <path d="M2018.5 166.5 L2030 180" stroke="#e0e0e0" stroke-width="1.8"/>
      <rect x="2003.5" y="157" width="3" height="7" fill="#a0a0a0"/><rect x="2008" y="151" width="3" height="13" fill="#a0a0a0"/><rect x="2012.5" y="154" width="3.5" height="10" fill="#3c9ad8"/></svg>
<div class="t" style="left:1980.00px;top:200.75px;font-size:18.02px;color:#f0f0f0;transform:scaleX(0.9706);">Analyze</div>
<div class="t" style="left:1991.07px;top:224.75px;font-size:18.02px;color:#f0f0f0;transform:scaleX(0.9894);">Data</div>
<svg class="s" style="left:2150.00px;top:140.00px;" width="130.00" height="120.00" viewBox="2150.00 140.00 130.00 120.00"><circle cx="2212.3" cy="198.5" r="56" fill="#ffffff"/>
      <rect x="2182" y="173.3" width="61" height="52.6" fill="#6265ee"/>
      <rect x="2190" y="181.5" width="18.7" height="14.4" fill="#fff"/><rect x="2216" y="181.5" width="18.8" height="14.4" fill="#fff"/>
      <rect x="2190" y="203.3" width="18.7" height="14.3" fill="#fff"/><rect x="2216" y="203.3" width="18.8" height="14.3" fill="#fff"/></svg>
<div class="t" style="left:2293.07px;top:179.57px;font-size:49.42px;color:#ffffff;font-weight:bold;transform:scaleX(0.8491);-webkit-text-stroke:1.6px #fff;">F</div>
<div class="t" style="left:2318.31px;top:179.57px;font-size:49.42px;color:#ffffff;font-weight:bold;transform:scaleX(1.2420);-webkit-text-stroke:1.6px #fff;">I</div>
<div class="t" style="left:2333.07px;top:179.57px;font-size:49.42px;color:#ffffff;font-weight:bold;transform:scaleX(0.9740);-webkit-text-stroke:1.6px #fff;">N</div>
<div class="t" style="left:2365.73px;top:179.57px;font-size:49.42px;color:#ffffff;font-weight:bold;transform:scaleX(1.1418);-webkit-text-stroke:1.6px #fff;">M</div>
<div class="t" style="left:2450.14px;top:179.57px;font-size:49.42px;color:#ffffff;font-weight:bold;transform:scaleX(0.9838);-webkit-text-stroke:1.6px #fff;">D</div>
<div class="t" style="left:2485.74px;top:179.57px;font-size:49.42px;color:#ffffff;font-weight:bold;transform:scaleX(0.7342);-webkit-text-stroke:1.6px #fff;">E</div>
<div class="t" style="left:2511.00px;top:179.57px;font-size:49.42px;color:#ffffff;font-weight:bold;transform:scaleX(0.7465);-webkit-text-stroke:1.6px #fff;">L</div>
<div class="t" style="left:2534.24px;top:179.57px;font-size:49.42px;color:#ffffff;font-weight:bold;transform:scaleX(0.8532);-webkit-text-stroke:1.6px #fff;">S</div>
<div class="t" style="left:2561.60px;top:179.57px;font-size:49.42px;color:#ffffff;font-weight:bold;transform:scaleX(0.7465);-webkit-text-stroke:1.6px #fff;">L</div>
<div class="t" style="left:2584.96px;top:179.57px;font-size:49.42px;color:#ffffff;font-weight:bold;-webkit-text-stroke:1.6px #fff;">A</div>
<div class="t" style="left:2621.43px;top:179.57px;font-size:49.42px;color:#ffffff;font-weight:bold;transform:scaleX(0.8625);-webkit-text-stroke:1.6px #fff;">B</div>
<svg class="s" style="left:2410.00px;top:150.00px;" width="40.00" height="50.00" viewBox="2410.00 150.00 40.00 50.00"><ellipse cx="2429.7" cy="179.7" rx="15.6" ry="17.8" fill="#fff"/>
      <ellipse cx="2429.7" cy="180.5" rx="7.9" ry="9.5" fill="#292929"/>
      <rect x="2421.8" y="158" width="15.8" height="13" fill="#292929"/>
      <rect x="2424.9" y="154.7" width="9" height="26.5" rx="4.5" fill="#fff"/></svg>
<div class="t" style="left:2294.22px;top:224.65px;font-size:35.61px;color:#ffffff;transform:scaleX(1.0937);">T</div>
<div class="t" style="left:2336.56px;top:224.65px;font-size:35.61px;color:#ffffff;transform:scaleX(1.1531);">e</div>
<div class="t" style="left:2379.78px;top:224.65px;font-size:35.61px;color:#ffffff;transform:scaleX(1.1750);">m</div>
<div class="t" style="left:2435.34px;top:224.65px;font-size:35.61px;color:#ffffff;transform:scaleX(1.2356);">p</div>
<div class="t" style="left:2480.41px;top:224.65px;font-size:35.61px;color:#ffffff;transform:scaleX(1.2481);">l</div>
<div class="t" style="left:2510.39px;top:224.65px;font-size:35.61px;color:#ffffff;transform:scaleX(0.9924);">a</div>
<div class="t" style="left:2553.85px;top:224.65px;font-size:35.61px;color:#ffffff;transform:scaleX(1.2224);">t</div>
<div class="t" style="left:2588.30px;top:224.65px;font-size:35.61px;color:#ffffff;transform:scaleX(1.1949);">e</div>
<div class="t" style="left:2632.40px;top:224.65px;font-size:35.61px;color:#ffffff;transform:scaleX(1.1232);">s</div>
<svg class="s" style="left:2848.00px;top:249.00px;" width="20.00" height="15.00" viewBox="2848.00 249.00 20.00 15.00"><path d="M2852 253.5 L2858 259.5 L2864 253.5" fill="none" stroke="#e6e6e6" stroke-width="1.6"/></svg>
<div class="r" style="left:11.00px;top:278.20px;width:2849.00px;height:26.40px;background:#0b0b0b;"></div>
<svg class="s" style="left:28.00px;top:280.00px;" width="24.00" height="23.00" viewBox="28.00 280.00 24.00 23.00"><path d="M50.2 281.7 V301.8 H30.5 Z" fill="#6a6a6a"/></svg>
<div class="r" style="left:53.50px;top:278.20px;width:29.30px;height:26.40px;background:#676767;"></div>
<div class="r" style="left:82.50px;top:278.20px;width:1.10px;height:26.40px;background:#525252;"></div>
<div class="t" style="left:61.17px;top:292.24px;font-size:22.09px;color:#f0f0f0;transform:scaleX(0.9300);">A</div>
<div class="r" style="left:127.50px;top:278.20px;width:1.10px;height:26.40px;background:#525252;"></div>
<div class="t" style="left:98.36px;top:292.24px;font-size:22.09px;color:#f0f0f0;transform:scaleX(0.9300);">B</div>
<div class="r" style="left:172.00px;top:278.20px;width:1.10px;height:26.40px;background:#525252;"></div>
<div class="t" style="left:142.70px;top:292.24px;font-size:22.09px;color:#f0f0f0;transform:scaleX(0.9300);">C</div>
<div class="r" style="left:216.50px;top:278.20px;width:1.10px;height:26.40px;background:#525252;"></div>
<div class="t" style="left:186.99px;top:292.24px;font-size:22.09px;color:#f0f0f0;transform:scaleX(0.9300);">D</div>
<div class="r" style="left:261.50px;top:278.20px;width:1.10px;height:26.40px;background:#525252;"></div>
<div class="t" style="left:232.26px;top:292.24px;font-size:22.09px;color:#f0f0f0;transform:scaleX(0.9300);">E</div>
<div class="r" style="left:306.50px;top:278.20px;width:1.10px;height:26.40px;background:#525252;"></div>
<div class="t" style="left:277.82px;top:292.24px;font-size:22.09px;color:#f0f0f0;transform:scaleX(0.9300);">F</div>
<div class="r" style="left:351.50px;top:278.20px;width:1.10px;height:26.40px;background:#525252;"></div>
<div class="t" style="left:321.74px;top:292.24px;font-size:22.09px;color:#f0f0f0;transform:scaleX(0.9300);">G</div>
<div class="r" style="left:396.50px;top:278.20px;width:1.10px;height:26.40px;background:#525252;"></div>
<div class="t" style="left:367.10px;top:292.24px;font-size:22.09px;color:#f0f0f0;transform:scaleX(0.9300);">H</div>
<div class="r" style="left:602.50px;top:278.20px;width:1.10px;height:26.40px;background:#525252;"></div>
<div class="t" style="left:497.17px;top:292.24px;font-size:22.09px;color:#f0f0f0;transform:scaleX(0.9300);">I</div>
<div class="r" style="left:808.50px;top:278.20px;width:1.10px;height:26.40px;background:#525252;"></div>
<div class="t" style="left:701.48px;top:292.24px;font-size:22.09px;color:#f0f0f0;transform:scaleX(0.9300);">J</div>
<div class="r" style="left:1014.50px;top:278.20px;width:1.10px;height:26.40px;background:#525252;"></div>
<div class="t" style="left:904.45px;top:292.24px;font-size:22.09px;color:#f0f0f0;transform:scaleX(0.9300);">K</div>
<div class="r" style="left:1220.50px;top:278.20px;width:1.10px;height:26.40px;background:#525252;"></div>
<div class="t" style="left:1111.78px;top:292.24px;font-size:22.09px;color:#f0f0f0;transform:scaleX(0.9300);">L</div>
<div class="r" style="left:1426.50px;top:278.20px;width:1.10px;height:26.40px;background:#525252;"></div>
<div class="t" style="left:1315.47px;top:292.24px;font-size:22.09px;color:#f0f0f0;transform:scaleX(0.9300);">M</div>
<div class="r" style="left:1632.50px;top:278.20px;width:1.10px;height:26.40px;background:#525252;"></div>
<div class="t" style="left:1522.60px;top:292.24px;font-size:22.09px;color:#f0f0f0;transform:scaleX(0.9300);">N</div>
<div class="r" style="left:1838.50px;top:278.20px;width:1.10px;height:26.40px;background:#525252;"></div>
<div class="t" style="left:1728.04px;top:292.24px;font-size:22.09px;color:#f0f0f0;transform:scaleX(0.9300);">O</div>
<div class="r" style="left:1894.00px;top:278.20px;width:1.10px;height:26.40px;background:#525252;"></div>
<div class="t" style="left:1859.61px;top:292.24px;font-size:22.09px;color:#f0f0f0;transform:scaleX(0.9300);">P</div>
<div class="r" style="left:2056.00px;top:278.20px;width:1.10px;height:26.40px;background:#525252;"></div>
<div class="t" style="left:1967.54px;top:292.24px;font-size:22.09px;color:#f0f0f0;transform:scaleX(0.9300);">Q</div>
<div class="r" style="left:2218.00px;top:278.20px;width:1.10px;height:26.40px;background:#525252;"></div>
<div class="t" style="left:2129.74px;top:292.24px;font-size:22.09px;color:#f0f0f0;transform:scaleX(0.9300);">R</div>
<div class="r" style="left:2380.00px;top:278.20px;width:1.10px;height:26.40px;background:#525252;"></div>
<div class="t" style="left:2292.67px;top:292.24px;font-size:22.09px;color:#f0f0f0;transform:scaleX(0.9300);">S</div>
<div class="r" style="left:2542.50px;top:278.20px;width:1.10px;height:26.40px;background:#525252;"></div>
<div class="t" style="left:2455.48px;top:292.24px;font-size:22.09px;color:#f0f0f0;transform:scaleX(0.9300);">T</div>
<div class="r" style="left:2704.50px;top:278.20px;width:1.10px;height:26.40px;background:#525252;"></div>
<div class="t" style="left:2616.60px;top:292.24px;font-size:22.09px;color:#f0f0f0;transform:scaleX(0.9300);">U</div>
<div class="r" style="left:2846.50px;top:278.20px;width:1.10px;height:26.40px;background:#525252;"></div>
<div class="t" style="left:2769.17px;top:292.24px;font-size:22.09px;color:#f0f0f0;transform:scaleX(0.9300);">V</div>
<div class="t" style="left:2850.49px;top:292.24px;font-size:22.09px;color:#f0f0f0;transform:scaleX(0.93);">W</div>
<div class="r" style="left:53.00px;top:304.60px;width:2807.00px;height:1365.40px;background:#ffffff;"></div>
<div class="r" style="left:11.00px;top:304.60px;width:42.00px;height:1365.40px;background:#0b0b0b;"></div>
<div class="r" style="left:11.00px;top:305.40px;width:42.00px;height:43.20px;background:#666666;"></div>
<div class="r" style="left:11.00px;top:348.50px;width:42.00px;height:1.10px;background:#525252;"></div>
<div class="t" style="left:25.99px;top:335.74px;font-size:22.09px;color:#f0f0f0;transform:scaleX(0.9300);">1</div>
<div class="r" style="left:11.00px;top:388.50px;width:42.00px;height:1.10px;background:#525252;"></div>
<div class="t" style="left:26.30px;top:375.74px;font-size:22.09px;color:#f0f0f0;transform:scaleX(0.9300);">2</div>
<div class="r" style="left:11.00px;top:429.50px;width:42.00px;height:1.10px;background:#525252;"></div>
<div class="t" style="left:26.30px;top:416.74px;font-size:22.09px;color:#f0f0f0;transform:scaleX(0.9300);">3</div>
<div class="r" style="left:11.00px;top:458.50px;width:42.00px;height:1.10px;background:#525252;"></div>
<div class="t" style="left:26.40px;top:445.74px;font-size:22.09px;color:#f0f0f0;transform:scaleX(0.9300);">4</div>
<div class="r" style="left:11.00px;top:500.50px;width:42.00px;height:1.10px;background:#525252;"></div>
<div class="t" style="left:26.30px;top:487.74px;font-size:22.09px;color:#f0f0f0;transform:scaleX(0.9300);">5</div>
<div class="r" style="left:11.00px;top:536.00px;width:42.00px;height:1.10px;background:#525252;"></div>
<div class="t" style="left:26.20px;top:523.24px;font-size:22.09px;color:#f0f0f0;transform:scaleX(0.9300);">6</div>
<div class="r" style="left:11.00px;top:565.10px;width:42.00px;height:1.10px;background:#525252;"></div>
<div class="t" style="left:26.30px;top:552.34px;font-size:22.09px;color:#f0f0f0;transform:scaleX(0.9300);">7</div>
<div class="r" style="left:11.00px;top:570.80px;width:42.00px;height:1.10px;background:#525252;"></div>
<div class="r" style="left:11.00px;top:599.85px;width:42.00px;height:1.10px;background:#525252;"></div>
<div class="t" style="left:26.30px;top:587.09px;font-size:22.09px;color:#f0f0f0;transform:scaleX(0.9300);">9</div>
<div class="r" style="left:11.00px;top:628.90px;width:42.00px;height:1.10px;background:#525252;"></div>
<div class="t" style="left:20.69px;top:616.14px;font-size:22.09px;color:#f0f0f0;transform:scaleX(0.9300);">10</div>
<div class="r" style="left:11.00px;top:657.95px;width:42.00px;height:1.10px;background:#525252;"></div>
<div class="t" style="left:21.56px;top:645.19px;font-size:22.09px;color:#f0f0f0;transform:scaleX(0.9300);">11</div>
<div class="r" style="left:11.00px;top:687.00px;width:42.00px;height:1.10px;background:#525252;"></div>
<div class="t" style="left:20.84px;top:674.24px;font-size:22.09px;color:#f0f0f0;transform:scaleX(0.9300);">12</div>
<div class="r" style="left:11.00px;top:716.05px;width:42.00px;height:1.10px;background:#525252;"></div>
<div class="t" style="left:20.74px;top:703.29px;font-size:22.09px;color:#f0f0f0;transform:scaleX(0.9300);">13</div>
<div class="r" style="left:11.00px;top:745.10px;width:42.00px;height:1.10px;background:#525252;"></div>
<div class="t" style="left:20.63px;top:732.34px;font-size:22.09px;color:#f0f0f0;transform:scaleX(0.9300);">14</div>
<div class="r" style="left:11.00px;top:766.80px;width:42.00px;height:1.10px;background:#525252;"></div>
<div class="t" style="left:20.74px;top:754.94px;font-size:22.09px;color:#f0f0f0;transform:scaleX(0.9300);">15</div>
<div class="r" style="left:11.00px;top:808.50px;width:42.00px;height:1.10px;background:#525252;"></div>
<div class="t" style="left:20.74px;top:795.84px;font-size:22.09px;color:#f0f0f0;transform:scaleX(0.9300);">16</div>
<div class="r" style="left:11.00px;top:837.53px;width:42.00px;height:1.10px;background:#525252;"></div>
<div class="t" style="left:20.84px;top:824.77px;font-size:22.09px;color:#f0f0f0;transform:scaleX(0.9300);">17</div>
<div class="r" style="left:11.00px;top:866.56px;width:42.00px;height:1.10px;background:#525252;"></div>
<div class="t" style="left:20.74px;top:853.80px;font-size:22.09px;color:#f0f0f0;transform:scaleX(0.9300);">18</div>
<div class="r" style="left:11.00px;top:895.59px;width:42.00px;height:1.10px;background:#525252;"></div>
<div class="t" style="left:20.79px;top:882.83px;font-size:22.09px;color:#f0f0f0;transform:scaleX(0.9300);">19</div>
<div class="r" style="left:11.00px;top:924.62px;width:42.00px;height:1.10px;background:#525252;"></div>
<div class="t" style="left:20.94px;top:911.86px;font-size:22.09px;color:#f0f0f0;transform:scaleX(0.9300);">20</div>
<div class="r" style="left:11.00px;top:953.65px;width:42.00px;height:1.10px;background:#525252;"></div>
<div class="t" style="left:21.05px;top:940.89px;font-size:22.09px;color:#f0f0f0;transform:scaleX(0.9300);">21</div>
<div class="r" style="left:11.00px;top:982.68px;width:42.00px;height:1.10px;background:#525252;"></div>
<div class="t" style="left:21.10px;top:969.92px;font-size:22.09px;color:#f0f0f0;transform:scaleX(0.9300);">22</div>
<div class="r" style="left:11.00px;top:1011.71px;width:42.00px;height:1.10px;background:#525252;"></div>
<div class="t" style="left:20.99px;top:998.95px;font-size:22.09px;color:#f0f0f0;transform:scaleX(0.9300);">23</div>
<div class="r" style="left:11.00px;top:1040.74px;width:42.00px;height:1.10px;background:#525252;"></div>
<div class="t" style="left:20.89px;top:1027.98px;font-size:22.09px;color:#f0f0f0;transform:scaleX(0.9300);">24</div>
<div class="r" style="left:11.00px;top:1069.77px;width:42.00px;height:1.10px;background:#525252;"></div>
<div class="t" style="left:20.99px;top:1057.01px;font-size:22.09px;color:#f0f0f0;transform:scaleX(0.9300);">25</div>
<div class="r" style="left:11.00px;top:1098.80px;width:42.00px;height:1.10px;background:#525252;"></div>
<div class="t" style="left:20.99px;top:1086.04px;font-size:22.09px;color:#f0f0f0;transform:scaleX(0.9300);">26</div>
<div class="r" style="left:11.00px;top:1127.83px;width:42.00px;height:1.10px;background:#525252;"></div>
<div class="t" style="left:21.10px;top:1115.07px;font-size:22.09px;color:#f0f0f0;transform:scaleX(0.9300);">27</div>
<div class="r" style="left:11.00px;top:1156.86px;width:42.00px;height:1.10px;background:#525252;"></div>
<div class="t" style="left:20.99px;top:1144.10px;font-size:22.09px;color:#f0f0f0;transform:scaleX(0.9300);">28</div>
<div class="r" style="left:11.00px;top:1185.89px;width:42.00px;height:1.10px;background:#525252;"></div>
<div class="t" style="left:21.05px;top:1173.13px;font-size:22.09px;color:#f0f0f0;transform:scaleX(0.9300);">29</div>
<div class="r" style="left:11.00px;top:1214.92px;width:42.00px;height:1.10px;background:#525252;"></div>
<div class="t" style="left:21.05px;top:1202.16px;font-size:22.09px;color:#f0f0f0;transform:scaleX(0.9300);">30</div>
<div class="r" style="left:11.00px;top:1243.95px;width:42.00px;height:1.10px;background:#525252;"></div>
<div class="t" style="left:21.15px;top:1231.19px;font-size:22.09px;color:#f0f0f0;transform:scaleX(0.9300);">31</div>
<div class="r" style="left:11.00px;top:1272.98px;width:42.00px;height:1.10px;background:#525252;"></div>
<div class="t" style="left:21.20px;top:1260.22px;font-size:22.09px;color:#f0f0f0;transform:scaleX(0.9300);">32</div>
<div class="r" style="left:11.00px;top:1302.01px;width:42.00px;height:1.10px;background:#525252;"></div>
<div class="t" style="left:21.10px;top:1289.25px;font-size:22.09px;color:#f0f0f0;transform:scaleX(0.9300);">33</div>
<div class="r" style="left:11.00px;top:1331.04px;width:42.00px;height:1.10px;background:#525252;"></div>
<div class="t" style="left:20.99px;top:1318.28px;font-size:22.09px;color:#f0f0f0;transform:scaleX(0.9300);">34</div>
<div class="r" style="left:11.00px;top:1360.07px;width:42.00px;height:1.10px;background:#525252;"></div>
<div class="t" style="left:21.10px;top:1347.31px;font-size:22.09px;color:#f0f0f0;transform:scaleX(0.9300);">35</div>
<div class="r" style="left:11.00px;top:1389.10px;width:42.00px;height:1.10px;background:#525252;"></div>
<div class="t" style="left:21.10px;top:1376.34px;font-size:22.09px;color:#f0f0f0;transform:scaleX(0.9300);">36</div>
<div class="r" style="left:11.00px;top:1418.13px;width:42.00px;height:1.10px;background:#525252;"></div>
<div class="t" style="left:21.20px;top:1405.37px;font-size:22.09px;color:#f0f0f0;transform:scaleX(0.9300);">37</div>
<div class="r" style="left:11.00px;top:1447.16px;width:42.00px;height:1.10px;background:#525252;"></div>
<div class="t" style="left:21.10px;top:1434.40px;font-size:22.09px;color:#f0f0f0;transform:scaleX(0.9300);">38</div>
<div class="r" style="left:11.00px;top:1476.19px;width:42.00px;height:1.10px;background:#525252;"></div>
<div class="t" style="left:21.15px;top:1463.43px;font-size:22.09px;color:#f0f0f0;transform:scaleX(0.9300);">39</div>
<div class="r" style="left:11.00px;top:1505.22px;width:42.00px;height:1.10px;background:#525252;"></div>
<div class="t" style="left:21.25px;top:1492.46px;font-size:22.09px;color:#f0f0f0;transform:scaleX(0.9300);">40</div>
<div class="r" style="left:11.00px;top:1534.25px;width:42.00px;height:1.10px;background:#525252;"></div>
<div class="t" style="left:21.35px;top:1521.49px;font-size:22.09px;color:#f0f0f0;transform:scaleX(0.9300);">41</div>
<div class="r" style="left:11.00px;top:1577.00px;width:42.00px;height:1.10px;background:#525252;"></div>
<div class="t" style="left:21.40px;top:1564.34px;font-size:22.09px;color:#f0f0f0;transform:scaleX(0.9300);">42</div>
<div class="r" style="left:11.00px;top:1606.05px;width:42.00px;height:1.10px;background:#525252;"></div>
<div class="t" style="left:21.30px;top:1593.29px;font-size:22.09px;color:#f0f0f0;transform:scaleX(0.9300);">43</div>
<div class="r" style="left:11.00px;top:1635.10px;width:42.00px;height:1.10px;background:#525252;"></div>
<div class="t" style="left:21.20px;top:1622.34px;font-size:22.09px;color:#f0f0f0;transform:scaleX(0.9300);">44</div>
<div class="r" style="left:11.00px;top:1664.15px;width:42.00px;height:1.10px;background:#525252;"></div>
<div class="t" style="left:21.30px;top:1651.39px;font-size:22.09px;color:#f0f0f0;transform:scaleX(0.9300);">45</div>
<div class="r" style="left:52.50px;top:304.00px;width:31.50px;height:2.20px;background:#1e7a45;"></div>
<div class="r" style="left:52.30px;top:304.00px;width:2.20px;height:45.00px;background:#1e7a45;"></div>
<div class="t" style="left:89.09px;top:328.79px;font-size:39.24px;color:#262626;font-weight:bold;transform:scaleX(1.0519);">Top Revenue</div>
<div class="t" style="left:88.62px;top:369.75px;font-size:35.90px;color:#000000;font-weight:bold;transform:scaleX(0.9769);">ABC Company Inc.</div>
<div class="t" style="left:86.58px;top:409.79px;font-size:22.82px;color:#2f7bf5;font-weight:bold;transform:scaleX(1.0082);">Go to Table of Contents</div>
<div class="r" style="left:87.50px;top:419.80px;width:257.10px;height:2.20px;background:#2f7bf5;"></div>
<div class="r" style="left:53.00px;top:458.60px;width:2807.00px;height:1.00px;background:#c0c0c0;"></div>
<div class="r" style="left:83.00px;top:459.40px;width:2764.00px;height:41.20px;background:#4b50d0;"></div>
<div class="r" style="left:603.00px;top:499.80px;width:1030.00px;height:1.00px;background:#ffffff;"></div>
<div class="t" style="left:951.53px;top:480.15px;font-size:38.52px;color:#ffffff;font-weight:bold;transform:scaleX(0.9582);">Top 5 Revenue Streams ($'000) - 5 years to December 2030</div>
<div class="r" style="left:83.00px;top:537.40px;width:1550.00px;height:27.30px;background:#6b70e4;"></div>
<div class="r" style="left:602.00px;top:537.40px;width:2.00px;height:27.30px;background:#ffffff;"></div>
<div class="r" style="left:808.00px;top:537.40px;width:2.00px;height:27.30px;background:#ffffff;"></div>
<div class="r" style="left:1014.00px;top:537.40px;width:2.00px;height:27.30px;background:#ffffff;"></div>
<div class="r" style="left:1220.00px;top:537.40px;width:2.00px;height:27.30px;background:#ffffff;"></div>
<div class="r" style="left:1426.00px;top:537.40px;width:2.00px;height:27.30px;background:#ffffff;"></div>
<div class="t" style="left:97.54px;top:550.89px;font-size:23.69px;color:#ffffff;font-weight:bold;transform:scaleX(0.9798);">Year Ending</div>
<div class="t" style="left:679.85px;top:550.89px;font-size:23.69px;color:#ffffff;font-weight:bold;transform:scaleX(1.0300);">2026</div>
<div class="t" style="left:885.91px;top:550.89px;font-size:23.69px;color:#ffffff;font-weight:bold;transform:scaleX(1.0300);">2027</div>
<div class="t" style="left:1091.79px;top:550.89px;font-size:23.69px;color:#ffffff;font-weight:bold;transform:scaleX(1.0300);">2028</div>
<div class="t" style="left:1297.85px;top:550.89px;font-size:23.69px;color:#ffffff;font-weight:bold;transform:scaleX(1.0300);">2029</div>
<div class="t" style="left:1503.91px;top:550.89px;font-size:23.69px;color:#ffffff;font-weight:bold;transform:scaleX(1.0300);">2030</div>
<div class="r" style="left:1894.50px;top:537.40px;width:809.50px;height:27.30px;background:#6b70e4;"></div>
<div class="r" style="left:2055.50px;top:537.40px;width:2.00px;height:27.30px;background:#ffffff;"></div>
<div class="r" style="left:2217.50px;top:537.40px;width:2.00px;height:27.30px;background:#ffffff;"></div>
<div class="r" style="left:2379.50px;top:537.40px;width:2.00px;height:27.30px;background:#ffffff;"></div>
<div class="r" style="left:2542.00px;top:537.40px;width:2.00px;height:27.30px;background:#ffffff;"></div>
<div class="t" style="left:1948.35px;top:550.89px;font-size:23.69px;color:#ffffff;font-weight:bold;transform:scaleX(1.0300);">2026</div>
<div class="t" style="left:2110.41px;top:550.89px;font-size:23.69px;color:#ffffff;font-weight:bold;transform:scaleX(1.0300);">2027</div>
<div class="t" style="left:2272.29px;top:550.89px;font-size:23.69px;color:#ffffff;font-weight:bold;transform:scaleX(1.0300);">2028</div>
<div class="t" style="left:2434.35px;top:550.89px;font-size:23.69px;color:#ffffff;font-weight:bold;transform:scaleX(1.0300);">2029</div>
<div class="t" style="left:2596.91px;top:550.89px;font-size:23.69px;color:#ffffff;font-weight:bold;transform:scaleX(1.0300);">2030</div>
<div class="t" style="left:85.83px;top:585.89px;font-size:22.24px;color:#000000;transform:scaleX(0.9689);">Subscription - Advanced Skills</div>
<div class="t" style="left:762.36px;top:585.89px;font-size:22.24px;color:#000000;transform:scaleX(0.9700);">362</div>
<div class="t" style="left:1979.15px;top:585.89px;font-size:22.24px;color:#000000;font-style:italic;">39.8%</div>
<div class="t" style="left:968.15px;top:585.89px;font-size:22.24px;color:#000000;transform:scaleX(0.9700);">893</div>
<div class="t" style="left:2141.15px;top:585.89px;font-size:22.24px;color:#000000;font-style:italic;">39.8%</div>
<div class="t" style="left:1156.35px;top:585.89px;font-size:22.24px;color:#000000;transform:scaleX(0.9700);">1,632</div>
<div class="t" style="left:2303.15px;top:585.89px;font-size:22.24px;color:#000000;font-style:italic;">40.0%</div>
<div class="t" style="left:1362.13px;top:585.89px;font-size:22.24px;color:#000000;transform:scaleX(0.9700);">2,798</div>
<div class="t" style="left:2465.65px;top:585.89px;font-size:22.24px;color:#000000;font-style:italic;">40.2%</div>
<div class="t" style="left:1568.13px;top:585.89px;font-size:22.24px;color:#000000;transform:scaleX(0.9700);">4,538</div>
<div class="t" style="left:2627.65px;top:585.89px;font-size:22.24px;color:#000000;font-style:italic;">40.4%</div>
<div class="t" style="left:85.83px;top:614.94px;font-size:22.24px;color:#000000;transform:scaleX(0.9689);">Subscription - Professional Certs</div>
<div class="t" style="left:761.93px;top:614.94px;font-size:22.24px;color:#000000;transform:scaleX(0.9700);">264</div>
<div class="t" style="left:1979.15px;top:614.94px;font-size:22.24px;color:#000000;font-style:italic;">29.0%</div>
<div class="t" style="left:968.15px;top:614.94px;font-size:22.24px;color:#000000;transform:scaleX(0.9700);">748</div>
<div class="t" style="left:2141.15px;top:614.94px;font-size:22.24px;color:#000000;font-style:italic;">33.3%</div>
<div class="t" style="left:1155.92px;top:614.94px;font-size:22.24px;color:#000000;transform:scaleX(0.9700);">1,364</div>
<div class="t" style="left:2303.15px;top:614.94px;font-size:22.24px;color:#000000;font-style:italic;">33.4%</div>
<div class="t" style="left:1362.13px;top:614.94px;font-size:22.24px;color:#000000;transform:scaleX(0.9700);">2,333</div>
<div class="t" style="left:2465.65px;top:614.94px;font-size:22.24px;color:#000000;font-style:italic;">33.5%</div>
<div class="t" style="left:1568.13px;top:614.94px;font-size:22.24px;color:#000000;transform:scaleX(0.9700);">3,775</div>
<div class="t" style="left:2627.65px;top:614.94px;font-size:22.24px;color:#000000;font-style:italic;">33.6%</div>
<div class="t" style="left:85.83px;top:643.99px;font-size:22.24px;color:#000000;transform:scaleX(0.9681);">Subscription - Core Learning</div>
<div class="t" style="left:762.36px;top:643.99px;font-size:22.24px;color:#000000;transform:scaleX(0.9700);">222</div>
<div class="t" style="left:1979.15px;top:643.99px;font-size:22.24px;color:#000000;font-style:italic;">24.4%</div>
<div class="t" style="left:968.15px;top:643.99px;font-size:22.24px;color:#000000;transform:scaleX(0.9700);">488</div>
<div class="t" style="left:2141.15px;top:643.99px;font-size:22.24px;color:#000000;font-style:italic;">21.7%</div>
<div class="t" style="left:1174.25px;top:643.99px;font-size:22.24px;color:#000000;transform:scaleX(0.9700);">881</div>
<div class="t" style="left:2303.15px;top:643.99px;font-size:22.24px;color:#000000;font-style:italic;">21.6%</div>
<div class="t" style="left:1362.24px;top:643.99px;font-size:22.24px;color:#000000;transform:scaleX(0.9700);">1,491</div>
<div class="t" style="left:2465.65px;top:643.99px;font-size:22.24px;color:#000000;font-style:italic;">21.4%</div>
<div class="t" style="left:1568.35px;top:643.99px;font-size:22.24px;color:#000000;transform:scaleX(0.9700);">2,392</div>
<div class="t" style="left:2627.65px;top:643.99px;font-size:22.24px;color:#000000;font-style:italic;">21.3%</div>
<div class="t" style="left:85.83px;top:673.04px;font-size:22.24px;color:#000000;transform:scaleX(0.9658);">Setup Fee - Professional Certs</div>
<div class="t" style="left:774.33px;top:673.04px;font-size:22.24px;color:#000000;transform:scaleX(0.9700);">62</div>
<div class="t" style="left:1991.50px;top:673.04px;font-size:22.24px;color:#000000;font-style:italic;">6.8%</div>
<div class="t" style="left:969.66px;top:673.04px;font-size:22.24px;color:#000000;transform:scaleX(0.9700);">116</div>
<div class="t" style="left:2153.50px;top:673.04px;font-size:22.24px;color:#000000;font-style:italic;">5.2%</div>
<div class="t" style="left:1173.93px;top:673.04px;font-size:22.24px;color:#000000;transform:scaleX(0.9700);">204</div>
<div class="t" style="left:2315.50px;top:673.04px;font-size:22.24px;color:#000000;font-style:italic;">5.0%</div>
<div class="t" style="left:1380.36px;top:673.04px;font-size:22.24px;color:#000000;transform:scaleX(0.9700);">337</div>
<div class="t" style="left:2478.00px;top:673.04px;font-size:22.24px;color:#000000;font-style:italic;">4.8%</div>
<div class="t" style="left:1586.25px;top:673.04px;font-size:22.24px;color:#000000;transform:scaleX(0.9700);">529</div>
<div class="t" style="left:2640.00px;top:673.04px;font-size:22.24px;color:#000000;font-style:italic;">4.7%</div>
<div class="t" style="left:85.82px;top:702.09px;font-size:22.24px;color:#000000;transform:scaleX(0.9780);">Other Revenue</div>
<div class="t" style="left:765.37px;top:702.02px;font-size:21.00px;color:#000000;transform:scaleX(1.3022);">-</div>
<div class="t" style="left:2034.71px;top:702.02px;font-size:21.00px;color:#000000;transform:scaleX(1.3605);">-</div>
<div class="t" style="left:971.37px;top:702.02px;font-size:21.00px;color:#000000;transform:scaleX(1.3022);">-</div>
<div class="t" style="left:2196.71px;top:702.02px;font-size:21.00px;color:#000000;transform:scaleX(1.3605);">-</div>
<div class="t" style="left:1177.37px;top:702.02px;font-size:21.00px;color:#000000;transform:scaleX(1.3022);">-</div>
<div class="t" style="left:2358.71px;top:702.02px;font-size:21.00px;color:#000000;transform:scaleX(1.3605);">-</div>
<div class="t" style="left:1383.37px;top:702.02px;font-size:21.00px;color:#000000;transform:scaleX(1.3022);">-</div>
<div class="t" style="left:2521.21px;top:702.02px;font-size:21.00px;color:#000000;transform:scaleX(1.3605);">-</div>
<div class="t" style="left:1589.37px;top:702.02px;font-size:21.00px;color:#000000;transform:scaleX(1.3022);">-</div>
<div class="t" style="left:2683.21px;top:702.02px;font-size:21.00px;color:#000000;transform:scaleX(1.3605);">-</div>
<div class="r" style="left:82.00px;top:716.20px;width:1551.00px;height:29.80px;background:#4cb2e6;"></div>
<div class="r" style="left:1894.00px;top:716.20px;width:810.00px;height:29.80px;background:#4cb2e6;"></div>
<div class="t" style="left:98.34px;top:731.73px;font-size:25.00px;color:#ffffff;font-weight:bold;transform:scaleX(1.0597);">Total Revenue</div>
<div class="t" style="left:754.93px;top:732.19px;font-size:23.69px;color:#ffffff;font-weight:bold;transform:scaleX(1.0200);">910</div>
<div class="t" style="left:1983.26px;top:732.19px;font-size:23.69px;color:#ffffff;font-weight:bold;font-style:italic;transform:scaleX(1.0800);">100%</div>
<div class="t" style="left:940.63px;top:732.19px;font-size:23.69px;color:#ffffff;font-weight:bold;transform:scaleX(1.0200);">2,246</div>
<div class="t" style="left:2145.26px;top:732.19px;font-size:23.69px;color:#ffffff;font-weight:bold;font-style:italic;transform:scaleX(1.0800);">100%</div>
<div class="t" style="left:1146.75px;top:732.19px;font-size:23.69px;color:#ffffff;font-weight:bold;transform:scaleX(1.0200);">4,080</div>
<div class="t" style="left:2307.26px;top:732.19px;font-size:23.69px;color:#ffffff;font-weight:bold;font-style:italic;transform:scaleX(1.0800);">100%</div>
<div class="t" style="left:1352.63px;top:732.19px;font-size:23.69px;color:#ffffff;font-weight:bold;transform:scaleX(1.0200);">6,959</div>
<div class="t" style="left:2469.76px;top:732.19px;font-size:23.69px;color:#ffffff;font-weight:bold;font-style:italic;transform:scaleX(1.0800);">100%</div>
<div class="t" style="left:1545.82px;top:732.19px;font-size:23.69px;color:#ffffff;font-weight:bold;transform:scaleX(1.0200);">11,234</div>
<div class="t" style="left:2631.76px;top:732.19px;font-size:23.69px;color:#ffffff;font-weight:bold;font-style:italic;transform:scaleX(1.0800);">100%</div>
<div class="r" style="left:83.00px;top:767.30px;width:2764.00px;height:41.40px;background:#4b50d0;"></div>
<div class="t" style="left:951.53px;top:788.25px;font-size:38.52px;color:#ffffff;font-weight:bold;transform:scaleX(0.9582);">Top 5 Revenue Streams ($'000) - 5 years to December 2030</div>
<div class="r" style="left:83.00px;top:1534.80px;width:2764.00px;height:42.10px;background:#4b50d0;"></div>
<div class="r" style="left:1838.50px;top:1534.80px;width:1.50px;height:42.10px;background:#ffffff;"></div>
<div class="t" style="left:699.14px;top:1556.05px;font-size:35.61px;color:#ffffff;font-weight:bold;transform:scaleX(1.0644);">Revenue Depth ($'000) - 2026</div>
<div class="t" style="left:2056.83px;top:1556.80px;font-size:36.34px;color:#ffffff;font-weight:bold;transform:scaleX(1.0477);">Monthly Run-Rate ($'000) - 2026</div>
<div class="r" style="left:2541.00px;top:1577.00px;width:306.00px;height:28.50px;background:#fff06e;box-sizing:border-box;border:1px solid #d8d8d8;"></div>
<div class="t" style="left:2667.12px;top:1591.64px;font-size:22.97px;color:#111111;font-weight:bold;transform:scaleX(1.0911);">2026</div>
<div class="r" style="left:83.00px;top:1617.50px;width:1494.00px;height:1.20px;background:#5ab4d6;"></div>
<div class="t" style="left:253.36px;top:1654.24px;font-size:22.38px;color:#000000;font-weight:bold;transform:scaleX(1.1488);">362.1</div>
<div class="r" style="left:1628.00px;top:1645.00px;width:11.50px;height:12.00px;background:#4cb2e6;"></div>
<div class="t" style="left:1644.30px;top:1652.44px;font-size:23.26px;color:#000000;font-weight:bold;transform:scaleX(1.0041);">Subscription -</div>
<div class="t" style="left:1644.42px;top:1678.44px;font-size:23.26px;color:#000000;font-weight:bold;transform:scaleX(0.9895);">Advanced Skills</div>
<div class="r" style="left:2334.00px;top:1657.00px;width:80.00px;height:15.00px;background:#ffffff;box-sizing:border-box;border:1.5px solid #333;"></div>
<div class="t" style="left:2347.23px;top:1673.24px;font-size:22.38px;color:#000000;font-weight:bold;transform:scaleX(0.9887);">2,001</div>
<svg class="s" style="left:170.00px;top:840.00px;" width="1470.00" height="660.00" viewBox="170.00 840.00 1470.00 660.00"><path d="M176.4 1489.50 H1633" stroke="#4a6c9c" stroke-width="1"/><path d="M176.4 1425.50 H1633" stroke="#4a6c9c" stroke-width="1"/><path d="M176.4 1361.50 H1633" stroke="#4a6c9c" stroke-width="1"/><path d="M176.4 1297.50 H1633" stroke="#4a6c9c" stroke-width="1"/><path d="M176.4 1234.50 H1633" stroke="#4a6c9c" stroke-width="1"/><path d="M176.4 1170.50 H1633" stroke="#4a6c9c" stroke-width="1"/><path d="M176.4 1106.50 H1633" stroke="#4a6c9c" stroke-width="1"/><path d="M176.4 1042.50 H1633" stroke="#4a6c9c" stroke-width="1"/><path d="M176.4 978.50 H1633" stroke="#4a6c9c" stroke-width="1"/><path d="M176.4 915.50 H1633" stroke="#4a6c9c" stroke-width="1"/><path d="M176.4 851.50 H1633" stroke="#4a6c9c" stroke-width="1"/></svg>
<div class="t" style="left:117.18px;top:1489.24px;font-size:23.26px;color:#000000;font-weight:bold;transform:scaleX(1.1300);">0%</div>
<div class="t" style="left:102.60px;top:1425.44px;font-size:23.26px;color:#000000;font-weight:bold;transform:scaleX(1.1300);">10%</div>
<div class="t" style="left:102.60px;top:1361.64px;font-size:23.26px;color:#000000;font-weight:bold;transform:scaleX(1.1300);">20%</div>
<div class="t" style="left:102.60px;top:1297.84px;font-size:23.26px;color:#000000;font-weight:bold;transform:scaleX(1.1300);">30%</div>
<div class="t" style="left:102.60px;top:1234.04px;font-size:23.26px;color:#000000;font-weight:bold;transform:scaleX(1.1300);">40%</div>
<div class="t" style="left:102.60px;top:1170.24px;font-size:23.26px;color:#000000;font-weight:bold;transform:scaleX(1.1300);">50%</div>
<div class="t" style="left:102.60px;top:1106.44px;font-size:23.26px;color:#000000;font-weight:bold;transform:scaleX(1.1300);">60%</div>
<div class="t" style="left:102.60px;top:1042.64px;font-size:23.26px;color:#000000;font-weight:bold;transform:scaleX(1.1300);">70%</div>
<div class="t" style="left:102.60px;top:978.84px;font-size:23.26px;color:#000000;font-weight:bold;transform:scaleX(1.1300);">80%</div>
<div class="t" style="left:102.60px;top:915.04px;font-size:23.26px;color:#000000;font-weight:bold;transform:scaleX(1.1300);">90%</div>
<div class="t" style="left:87.88px;top:851.24px;font-size:23.26px;color:#000000;font-weight:bold;transform:scaleX(1.1300);">100%</div>
<div class="r" style="left:225.00px;top:1235.40px;width:195.00px;height:253.80px;background:#4cb2e6;"></div>
<div class="r" style="left:225.00px;top:1050.31px;width:195.00px;height:185.09px;background:#4b50d0;"></div>
<div class="r" style="left:225.00px;top:894.67px;width:195.00px;height:155.64px;background:#f07b6e;"></div>
<div class="r" style="left:225.00px;top:851.20px;width:195.00px;height:43.47px;background:#f4b400;"></div>
<div class="t" style="left:293.52px;top:1518.24px;font-size:23.26px;color:#000000;font-weight:bold;transform:scaleX(1.1200);">2026</div>
<div class="r" style="left:516.80px;top:1235.42px;width:193.90px;height:253.78px;background:#4cb2e6;"></div>
<div class="r" style="left:516.80px;top:1022.85px;width:193.90px;height:212.57px;background:#4b50d0;"></div>
<div class="r" style="left:516.80px;top:884.17px;width:193.90px;height:138.68px;background:#f07b6e;"></div>
<div class="r" style="left:516.80px;top:851.20px;width:193.90px;height:32.97px;background:#f4b400;"></div>
<div class="t" style="left:584.84px;top:1518.24px;font-size:23.26px;color:#000000;font-weight:bold;transform:scaleX(1.1200);">2027</div>
<div class="r" style="left:808.00px;top:1234.06px;width:193.70px;height:255.14px;background:#4cb2e6;"></div>
<div class="r" style="left:808.00px;top:1020.82px;width:193.70px;height:213.24px;background:#4b50d0;"></div>
<div class="r" style="left:808.00px;top:883.09px;width:193.70px;height:137.73px;background:#f07b6e;"></div>
<div class="r" style="left:808.00px;top:851.20px;width:193.70px;height:31.89px;background:#f4b400;"></div>
<div class="t" style="left:875.81px;top:1518.24px;font-size:23.26px;color:#000000;font-weight:bold;transform:scaleX(1.1200);">2028</div>
<div class="r" style="left:1098.80px;top:1232.68px;width:194.00px;height:256.52px;background:#4cb2e6;"></div>
<div class="r" style="left:1098.80px;top:1018.79px;width:194.00px;height:213.89px;background:#4b50d0;"></div>
<div class="r" style="left:1098.80px;top:882.10px;width:194.00px;height:136.69px;background:#f07b6e;"></div>
<div class="r" style="left:1098.80px;top:851.20px;width:194.00px;height:30.90px;background:#f4b400;"></div>
<div class="t" style="left:1166.82px;top:1518.24px;font-size:23.26px;color:#000000;font-weight:bold;transform:scaleX(1.1200);">2029</div>
<div class="r" style="left:1390.00px;top:1231.48px;width:193.50px;height:257.72px;background:#4cb2e6;"></div>
<div class="r" style="left:1390.00px;top:1017.09px;width:193.50px;height:214.39px;background:#4b50d0;"></div>
<div class="r" style="left:1390.00px;top:881.24px;width:193.50px;height:135.85px;background:#f07b6e;"></div>
<div class="r" style="left:1390.00px;top:851.20px;width:193.50px;height:30.04px;background:#f4b400;"></div>
<div class="t" style="left:1457.84px;top:1518.24px;font-size:23.26px;color:#000000;font-weight:bold;transform:scaleX(1.1200);">2030</div>
<div class="r" style="left:290.18px;top:1344.80px;width:64.63px;height:35.00px;background:#dcebf6;"></div>
<div class="t" style="left:304.55px;top:1362.44px;font-size:22.67px;color:#000000;font-weight:bold;transform:scaleX(1.1200);">362</div>
<div class="r" style="left:289.87px;top:1125.36px;width:65.27px;height:35.00px;background:#b2b4ee;"></div>
<div class="t" style="left:303.98px;top:1143.00px;font-size:22.67px;color:#000000;font-weight:bold;transform:scaleX(1.1200);">264</div>
<div class="r" style="left:290.31px;top:954.99px;width:64.38px;height:35.00px;background:#f7c7ae;"></div>
<div class="t" style="left:304.42px;top:972.63px;font-size:22.67px;color:#000000;font-weight:bold;transform:scaleX(1.1200);">222</div>
<div class="r" style="left:297.36px;top:855.43px;width:50.28px;height:35.00px;background:#fdefd2;"></div>
<div class="t" style="left:311.47px;top:873.07px;font-size:22.67px;color:#000000;font-weight:bold;transform:scaleX(1.1200);">62</div>
<div class="r" style="left:307.00px;top:833.70px;width:31.00px;height:35.00px;background:#dde9da;"></div>
<div class="t" style="left:318.45px;top:851.34px;font-size:22.67px;color:#000000;font-weight:bold;transform:scaleX(1.1200);">0</div>
<div class="r" style="left:581.43px;top:1344.81px;width:64.63px;height:35.00px;background:#dcebf6;"></div>
<div class="t" style="left:595.67px;top:1362.45px;font-size:22.67px;color:#000000;font-weight:bold;transform:scaleX(1.1200);">893</div>
<div class="r" style="left:581.50px;top:1111.63px;width:64.51px;height:35.00px;background:#b2b4ee;"></div>
<div class="t" style="left:595.48px;top:1129.27px;font-size:22.67px;color:#000000;font-weight:bold;transform:scaleX(1.1200);">748</div>
<div class="r" style="left:581.18px;top:936.01px;width:65.14px;height:35.00px;background:#f7c7ae;"></div>
<div class="t" style="left:595.80px;top:953.65px;font-size:22.67px;color:#000000;font-weight:bold;transform:scaleX(1.1200);">488</div>
<div class="r" style="left:582.51px;top:850.18px;width:62.47px;height:35.00px;background:#fdefd2;"></div>
<div class="t" style="left:595.99px;top:867.82px;font-size:22.67px;color:#000000;font-weight:bold;transform:scaleX(1.1200);">116</div>
<div class="r" style="left:598.25px;top:833.70px;width:31.00px;height:35.00px;background:#dde9da;"></div>
<div class="t" style="left:609.70px;top:851.34px;font-size:22.67px;color:#000000;font-weight:bold;transform:scaleX(1.1200);">0</div>
<div class="r" style="left:862.38px;top:1344.13px;width:84.95px;height:35.00px;background:#dcebf6;"></div>
<div class="t" style="left:875.85px;top:1361.77px;font-size:22.67px;color:#000000;font-weight:bold;transform:scaleX(1.1200);">1,632</div>
<div class="r" style="left:861.93px;top:1109.94px;width:85.84px;height:35.00px;background:#b2b4ee;"></div>
<div class="t" style="left:875.41px;top:1127.58px;font-size:22.67px;color:#000000;font-weight:bold;transform:scaleX(1.1200);">1,364</div>
<div class="r" style="left:872.41px;top:934.46px;width:64.89px;height:35.00px;background:#f7c7ae;"></div>
<div class="t" style="left:886.64px;top:952.10px;font-size:22.67px;color:#000000;font-weight:bold;transform:scaleX(1.1200);">881</div>
<div class="r" style="left:872.22px;top:849.65px;width:65.27px;height:35.00px;background:#fdefd2;"></div>
<div class="t" style="left:886.33px;top:867.28px;font-size:22.67px;color:#000000;font-weight:bold;transform:scaleX(1.1200);">204</div>
<div class="r" style="left:889.35px;top:833.70px;width:31.00px;height:35.00px;background:#dde9da;"></div>
<div class="t" style="left:900.80px;top:851.34px;font-size:22.67px;color:#000000;font-weight:bold;transform:scaleX(1.1200);">0</div>
<div class="r" style="left:1152.88px;top:1343.44px;width:85.84px;height:35.00px;background:#dcebf6;"></div>
<div class="t" style="left:1166.99px;top:1361.08px;font-size:22.67px;color:#000000;font-weight:bold;transform:scaleX(1.1200);">2,798</div>
<div class="r" style="left:1152.94px;top:1108.24px;width:85.71px;height:35.00px;background:#b2b4ee;"></div>
<div class="t" style="left:1167.06px;top:1125.87px;font-size:22.67px;color:#000000;font-weight:bold;transform:scaleX(1.1200);">2,333</div>
<div class="r" style="left:1153.13px;top:932.94px;width:85.33px;height:35.00px;background:#f7c7ae;"></div>
<div class="t" style="left:1166.61px;top:950.58px;font-size:22.67px;color:#000000;font-weight:bold;transform:scaleX(1.1200);">1,491</div>
<div class="r" style="left:1163.48px;top:849.15px;width:64.63px;height:35.00px;background:#fdefd2;"></div>
<div class="t" style="left:1177.85px;top:866.79px;font-size:22.67px;color:#000000;font-weight:bold;transform:scaleX(1.1200);">337</div>
<div class="r" style="left:1180.30px;top:833.70px;width:31.00px;height:35.00px;background:#dde9da;"></div>
<div class="t" style="left:1191.75px;top:851.34px;font-size:22.67px;color:#000000;font-weight:bold;transform:scaleX(1.1200);">0</div>
<div class="r" style="left:1443.58px;top:1342.84px;width:86.35px;height:35.00px;background:#dcebf6;"></div>
<div class="t" style="left:1458.20px;top:1360.48px;font-size:22.67px;color:#000000;font-weight:bold;transform:scaleX(1.1200);">4,538</div>
<div class="r" style="left:1443.64px;top:1106.78px;width:86.22px;height:35.00px;background:#b2b4ee;"></div>
<div class="t" style="left:1458.01px;top:1124.42px;font-size:22.67px;color:#000000;font-weight:bold;transform:scaleX(1.1200);">3,775</div>
<div class="r" style="left:1443.96px;top:931.67px;width:85.58px;height:35.00px;background:#f7c7ae;"></div>
<div class="t" style="left:1458.07px;top:949.30px;font-size:22.67px;color:#000000;font-weight:bold;transform:scaleX(1.1200);">2,392</div>
<div class="r" style="left:1454.43px;top:848.72px;width:64.63px;height:35.00px;background:#fdefd2;"></div>
<div class="t" style="left:1468.67px;top:866.36px;font-size:22.67px;color:#000000;font-weight:bold;transform:scaleX(1.1200);">529</div>
<div class="r" style="left:1471.25px;top:833.70px;width:31.00px;height:35.00px;background:#dde9da;"></div>
<div class="t" style="left:1482.70px;top:851.34px;font-size:22.67px;color:#000000;font-weight:bold;transform:scaleX(1.1200);">0</div>
<svg class="s" style="left:1645.00px;top:870.00px;" width="75.00" height="560.00" viewBox="1645.00 870.00 75.00 560.00"><path d="M1654 888.8 H1708" stroke="#4cb2e6" stroke-width="4.5" stroke-linecap="round"/><path d="M1654 1020.5 H1708" stroke="#4b50d0" stroke-width="4.5" stroke-linecap="round"/><path d="M1654 1152.8 H1708" stroke="#f07b6e" stroke-width="4.5" stroke-linecap="round"/><path d="M1654 1284.8 H1708" stroke="#f4b400" stroke-width="4.5" stroke-linecap="round"/><path d="M1654 1417.0 H1708" stroke="#2bb5a0" stroke-width="4.5" stroke-linecap="round"/><circle cx="1680.0" cy="888.8" r="5.3" fill="#4cb2e6"/><rect x="1674.5" y="1015.0" width="11" height="11" fill="#4b50d0"/><path d="M1674.0 1158.8 L1680.0 1146.3 L1686.0 1158.8 Z" fill="#f07b6e"/><path d="M1675.0 1279.3 L1685.0 1290.3 M1685.0 1279.3 L1675.0 1290.3" stroke="#f4b400" stroke-width="1.3"/><rect x="1674.5" y="1411.5" width="11" height="11" fill="#4cb07a"/></svg>
<div class="t" style="left:1713.50px;top:888.14px;font-size:22.67px;color:#000000;font-weight:bold;transform:scaleX(1.0318);">Subscription -</div>
<div class="t" style="left:1713.63px;top:914.74px;font-size:22.67px;color:#000000;font-weight:bold;transform:scaleX(1.0125);">Advanced Skills</div>
<div class="t" style="left:1713.50px;top:1019.84px;font-size:22.67px;color:#000000;font-weight:bold;transform:scaleX(1.0318);">Subscription -</div>
<div class="t" style="left:1712.69px;top:1046.44px;font-size:22.67px;color:#000000;font-weight:bold;transform:scaleX(1.0225);">Professional Certs</div>
<div class="t" style="left:1713.50px;top:1152.14px;font-size:22.67px;color:#000000;font-weight:bold;transform:scaleX(1.0238);">Subscription - Core</div>
<div class="t" style="left:1712.47px;top:1178.74px;font-size:22.67px;color:#000000;font-weight:bold;transform:scaleX(1.1732);">Learning</div>
<div class="t" style="left:1713.48px;top:1284.14px;font-size:22.67px;color:#000000;font-weight:bold;transform:scaleX(1.0511);">Setup Fee -</div>
<div class="t" style="left:1712.69px;top:1310.74px;font-size:22.67px;color:#000000;font-weight:bold;transform:scaleX(1.0230);">Professional Certs</div>
<div class="t" style="left:1713.25px;top:1416.34px;font-size:22.67px;color:#000000;font-weight:bold;transform:scaleX(1.0482);">Other Revenue</div>
<svg class="s" style="left:2060.00px;top:840.00px;" width="800.00" height="660.00" viewBox="2060.00 840.00 800.00 660.00"><path d="M2069.7 1486.50 H2845.7" stroke="#55aed6" stroke-width="1"/><path d="M2069.7 1423.50 H2845.7" stroke="#55aed6" stroke-width="1"/><path d="M2069.7 1359.50 H2845.7" stroke="#55aed6" stroke-width="1"/><path d="M2069.7 1295.50 H2845.7" stroke="#55aed6" stroke-width="1"/><path d="M2069.7 1232.50 H2845.7" stroke="#55aed6" stroke-width="1"/><path d="M2069.7 1168.50 H2845.7" stroke="#55aed6" stroke-width="1"/><path d="M2069.7 1105.50 H2845.7" stroke="#55aed6" stroke-width="1"/><path d="M2069.7 1041.50 H2845.7" stroke="#55aed6" stroke-width="1"/><path d="M2069.7 977.50 H2845.7" stroke="#55aed6" stroke-width="1"/><path d="M2069.7 914.50 H2845.7" stroke="#55aed6" stroke-width="1"/><path d="M2069.7 850.50 H2845.7" stroke="#55aed6" stroke-width="1"/><polyline points="2147.0,1440.7 2302.6,1373.1 2458.2,1279.1 2613.8,1130.9 2769.4,909.6" fill="none" stroke="#4cb2e6" stroke-width="3.6" stroke-linejoin="round"/><polyline points="2147.0,1453.1 2302.6,1391.6 2458.2,1313.2 2613.8,1190.0 2769.4,1006.6" fill="none" stroke="#4b50d0" stroke-width="3.6" stroke-linejoin="round"/><polyline points="2147.0,1458.5 2302.6,1424.6 2458.2,1374.7 2613.8,1297.1 2769.4,1182.5" fill="none" stroke="#f07b6e" stroke-width="3.6" stroke-linejoin="round"/><polyline points="2147.0,1478.8 2302.6,1471.9 2458.2,1460.8 2613.8,1443.8 2769.4,1419.4" fill="none" stroke="#f4b400" stroke-width="3.6" stroke-linejoin="round"/><polyline points="2147.0,1486.7 2302.6,1486.7 2458.2,1486.7 2613.8,1486.7 2769.4,1486.7" fill="none" stroke="#2bb5a0" stroke-width="3.6" stroke-linejoin="round"/><circle cx="2147.0" cy="1440.7" r="7.3" fill="#4cb2e6"/><circle cx="2302.6" cy="1373.1" r="7.3" fill="#4cb2e6"/><circle cx="2458.2" cy="1279.1" r="7.3" fill="#4cb2e6"/><circle cx="2613.8" cy="1130.9" r="7.3" fill="#4cb2e6"/><circle cx="2769.4" cy="909.6" r="7.3" fill="#4cb2e6"/><rect x="2138.8" y="1444.9" width="16.5" height="16.5" fill="#4b50d0"/><rect x="2294.3" y="1383.3" width="16.5" height="16.5" fill="#4b50d0"/><rect x="2449.9" y="1305.0" width="16.5" height="16.5" fill="#4b50d0"/><rect x="2605.6" y="1181.7" width="16.5" height="16.5" fill="#4b50d0"/><rect x="2761.2" y="998.3" width="16.5" height="16.5" fill="#4b50d0"/><path d="M2138.5 1465.5 L2147.0 1449.5 L2155.5 1465.5 Z" fill="#f07b6e"/><path d="M2294.1 1431.6 L2302.6 1415.6 L2311.1 1431.6 Z" fill="#f07b6e"/><path d="M2449.7 1381.7 L2458.2 1365.7 L2466.7 1381.7 Z" fill="#f07b6e"/><path d="M2605.3 1304.1 L2613.8 1288.1 L2622.3 1304.1 Z" fill="#f07b6e"/><path d="M2760.9 1189.5 L2769.4 1173.5 L2777.9 1189.5 Z" fill="#f07b6e"/><rect x="2139.0" y="1470.8" width="16.0" height="16.0" fill="#f4b400"/><rect x="2294.6" y="1463.9" width="16.0" height="16.0" fill="#f4b400"/><rect x="2450.2" y="1452.8" width="16.0" height="16.0" fill="#f4b400"/><rect x="2605.8" y="1435.8" width="16.0" height="16.0" fill="#f4b400"/><rect x="2761.4" y="1411.4" width="16.0" height="16.0" fill="#f4b400"/><rect x="2139.0" y="1478.7" width="16.0" height="16.0" fill="#2bb5a0"/><rect x="2294.6" y="1478.7" width="16.0" height="16.0" fill="#2bb5a0"/><rect x="2450.2" y="1478.7" width="16.0" height="16.0" fill="#2bb5a0"/><rect x="2605.8" y="1478.7" width="16.0" height="16.0" fill="#2bb5a0"/><rect x="2761.4" y="1478.7" width="16.0" height="16.0" fill="#2bb5a0"/></svg>
<div class="t" style="left:2032.04px;top:1485.72px;font-size:21.00px;color:#000000;font-weight:bold;transform:scaleX(1.3819);">-</div>
<div class="t" style="left:1999.03px;top:1422.85px;font-size:22.67px;color:#000000;font-weight:bold;transform:scaleX(1.1200);">500</div>
<div class="t" style="left:1977.83px;top:1359.26px;font-size:22.67px;color:#000000;font-weight:bold;transform:scaleX(1.1200);">1,000</div>
<div class="t" style="left:1977.83px;top:1295.67px;font-size:22.67px;color:#000000;font-weight:bold;transform:scaleX(1.1200);">1,500</div>
<div class="t" style="left:1977.83px;top:1232.08px;font-size:22.67px;color:#000000;font-weight:bold;transform:scaleX(1.1200);">2,000</div>
<div class="t" style="left:1977.83px;top:1168.49px;font-size:22.67px;color:#000000;font-weight:bold;transform:scaleX(1.1200);">2,500</div>
<div class="t" style="left:1977.83px;top:1104.90px;font-size:22.67px;color:#000000;font-weight:bold;transform:scaleX(1.1200);">3,000</div>
<div class="t" style="left:1977.83px;top:1041.31px;font-size:22.67px;color:#000000;font-weight:bold;transform:scaleX(1.1200);">3,500</div>
<div class="t" style="left:1977.83px;top:977.72px;font-size:22.67px;color:#000000;font-weight:bold;transform:scaleX(1.1200);">4,000</div>
<div class="t" style="left:1977.83px;top:914.13px;font-size:22.67px;color:#000000;font-weight:bold;transform:scaleX(1.1200);">4,500</div>
<div class="t" style="left:1977.83px;top:850.54px;font-size:22.67px;color:#000000;font-weight:bold;transform:scaleX(1.1200);">5,000</div>
<div class="t" style="left:2118.02px;top:1516.14px;font-size:23.26px;color:#000000;font-weight:bold;transform:scaleX(1.1200);">2026</div>
<div class="t" style="left:2273.69px;top:1516.14px;font-size:23.26px;color:#000000;font-weight:bold;transform:scaleX(1.1200);">2027</div>
<div class="t" style="left:2429.16px;top:1516.14px;font-size:23.26px;color:#000000;font-weight:bold;transform:scaleX(1.1200);">2028</div>
<div class="t" style="left:2584.82px;top:1516.14px;font-size:23.26px;color:#000000;font-weight:bold;transform:scaleX(1.1200);">2029</div>
<div class="t" style="left:2740.49px;top:1516.14px;font-size:23.26px;color:#000000;font-weight:bold;transform:scaleX(1.1200);">2030</div>
<div class="r" style="left:2860.00px;top:277.80px;width:31.00px;height:1392.20px;background:#111111;"></div>
<div class="r" style="left:2864.00px;top:280.00px;width:24.00px;height:22.00px;background:#161616;border-radius:8px;"></div>
<svg class="s" style="left:2862.00px;top:282.00px;" width="28.00" height="18.00" viewBox="2862.00 282.00 28.00 18.00"><path d="M2869.5 296 L2875.8 286.5 L2882 296 Z" fill="#9a9a9a" stroke="#9a9a9a" stroke-width="1.5" stroke-linejoin="round"/></svg>
<div class="r" style="left:2869.90px;top:304.00px;width:12.20px;height:563.00px;background:#9a9a9a;border-radius:6px;"></div>
<div class="r" style="left:2864.00px;top:1648.00px;width:24.00px;height:20.00px;background:#161616;border-radius:8px;"></div>
<svg class="s" style="left:2862.00px;top:1650.00px;" width="28.00" height="18.00" viewBox="2862.00 1650.00 28.00 18.00"><path d="M2869.5 1654 L2875.8 1663 L2882 1654 Z" fill="#9a9a9a" stroke="#9a9a9a" stroke-width="1.5" stroke-linejoin="round"/></svg>
<div class="r" style="left:11.00px;top:1670.00px;width:2880.00px;height:48.00px;background:#0b0b0b;"></div>
<svg class="s" style="left:1860.00px;top:1668.00px;" width="185.00" height="48.00" viewBox="1860.00 1668.00 185.00 48.00">
      <defs><linearGradient id="tg" x1="0" y1="0" x2="0" y2="1"><stop offset="0" stop-color="#ffffff"/><stop offset="0.55" stop-color="#eef6fc"/><stop offset="1" stop-color="#c9e2f5"/></linearGradient></defs>
      <path d="M1860 1668 H2045 V1670 H2038 Q2028 1670 2028 1680 V1704 Q2028 1712.2 2020 1712.2 H1884 Q1876 1712.2 1876 1704 V1680 Q1876 1670 1866 1670 H1860 Z" fill="url(#tg)"/></svg>
<div class="t" style="left:1887.79px;top:1690.39px;font-size:21.08px;color:#1a1a1a;transform:scaleX(0.9831);">Top_Revenue</div>
<div class="r" style="left:1888.00px;top:1704.90px;width:127.00px;height:3.10px;background:#1e7a45;"></div>
<div class="r" style="left:177.40px;top:1676.20px;width:88.60px;height:35.50px;background:#ffed6e;border-radius:6px;"></div>
<div class="t" style="left:190.50px;top:1695.84px;font-size:21.51px;color:#111111;transform:scaleX(0.9600);">Payroll</div>
<div class="r" style="left:272.50px;top:1680.00px;width:1.00px;height:28.00px;background:#555555;"></div>
<div class="r" style="left:279.30px;top:1676.20px;width:86.30px;height:35.50px;background:#ffed6e;border-radius:6px;"></div>
<div class="t" style="left:287.64px;top:1695.84px;font-size:21.51px;color:#111111;transform:scaleX(0.9600);">CAPEX</div>
<div class="r" style="left:372.10px;top:1680.00px;width:1.00px;height:28.00px;background:#555555;"></div>
<div class="r" style="left:379.20px;top:1676.20px;width:112.80px;height:35.50px;background:#ffed6e;border-radius:6px;"></div>
<div class="t" style="left:392.42px;top:1695.84px;font-size:21.51px;color:#111111;transform:scaleX(0.9600);">CapTable</div>
<div class="r" style="left:498.50px;top:1680.00px;width:1.00px;height:28.00px;background:#555555;"></div>
<div class="r" style="left:505.30px;top:1676.20px;width:89.80px;height:35.50px;background:#ffed6e;border-radius:6px;"></div>
<div class="t" style="left:518.74px;top:1695.84px;font-size:21.51px;color:#111111;transform:scaleX(0.9600);">Capital</div>
<div class="r" style="left:601.60px;top:1680.00px;width:1.00px;height:28.00px;background:#555555;"></div>
<div class="r" style="left:607.90px;top:1676.20px;width:41.70px;height:35.50px;background:#4cb2e6;border-radius:6px;"></div>
<div class="t" style="left:619.03px;top:1695.84px;font-size:21.51px;color:#111111;transform:scaleX(0.9600);">IS</div>
<div class="r" style="left:656.10px;top:1680.00px;width:1.00px;height:28.00px;background:#555555;"></div>
<div class="r" style="left:663.30px;top:1676.20px;width:47.50px;height:35.50px;background:#4cb2e6;border-radius:6px;"></div>
<div class="t" style="left:673.71px;top:1695.84px;font-size:21.51px;color:#111111;transform:scaleX(0.9600);">CF</div>
<div class="r" style="left:717.30px;top:1680.00px;width:1.00px;height:28.00px;background:#555555;"></div>
<div class="r" style="left:724.00px;top:1676.20px;width:47.50px;height:35.50px;background:#4cb2e6;border-radius:6px;"></div>
<div class="t" style="left:734.16px;top:1695.84px;font-size:21.51px;color:#111111;transform:scaleX(0.9600);">BS</div>
<div class="r" style="left:778.00px;top:1680.00px;width:1.00px;height:28.00px;background:#555555;"></div>
<div class="r" style="left:785.20px;top:1676.20px;width:114.20px;height:35.50px;background:#4cb2e6;border-radius:6px;"></div>
<div class="t" style="left:796.80px;top:1695.84px;font-size:21.51px;color:#111111;transform:scaleX(0.9600);">Scenarios</div>
<div class="r" style="left:905.90px;top:1680.00px;width:1.00px;height:28.00px;background:#555555;"></div>
<div class="r" style="left:913.10px;top:1676.20px;width:114.20px;height:35.50px;background:#4cb2e6;border-radius:6px;"></div>
<div class="t" style="left:929.04px;top:1695.84px;font-size:21.51px;color:#111111;transform:scaleX(0.9600);">Valuation</div>
<div class="r" style="left:1033.80px;top:1680.00px;width:1.00px;height:28.00px;background:#555555;"></div>
<div class="r" style="left:1041.00px;top:1676.20px;width:113.70px;height:35.50px;background:#4cb2e6;border-radius:6px;"></div>
<div class="t" style="left:1053.69px;top:1695.84px;font-size:21.51px;color:#111111;transform:scaleX(0.9600);">Summary</div>
<div class="r" style="left:1161.20px;top:1680.00px;width:1.00px;height:28.00px;background:#555555;"></div>
<div class="r" style="left:1167.70px;top:1676.20px;width:47.70px;height:35.50px;background:#4cb2e6;border-radius:6px;"></div>
<div class="t" style="left:1177.90px;top:1695.84px;font-size:21.51px;color:#111111;transform:scaleX(0.9600);">BE</div>
<div class="r" style="left:1221.90px;top:1680.00px;width:1.00px;height:28.00px;background:#555555;"></div>
<div class="r" style="left:1229.30px;top:1676.20px;width:71.00px;height:35.50px;background:#4cb2e6;border-radius:6px;"></div>
<div class="t" style="left:1239.02px;top:1695.84px;font-size:21.51px;color:#111111;transform:scaleX(0.9600);">ROIC</div>
<div class="r" style="left:1306.80px;top:1680.00px;width:1.00px;height:28.00px;background:#555555;"></div>
<div class="r" style="left:1313.70px;top:1676.20px;width:85.30px;height:35.50px;background:#4cb2e6;border-radius:6px;"></div>
<div class="t" style="left:1326.29px;top:1695.84px;font-size:21.51px;color:#111111;transform:scaleX(0.9600);">Charts</div>
<div class="r" style="left:1405.50px;top:1680.00px;width:1.00px;height:28.00px;background:#555555;"></div>
<div class="r" style="left:1412.00px;top:1676.20px;width:63.60px;height:35.50px;background:#4cb2e6;border-radius:6px;"></div>
<div class="t" style="left:1422.05px;top:1695.84px;font-size:21.51px;color:#111111;transform:scaleX(0.9600);">KPIs</div>
<div class="r" style="left:1482.10px;top:1680.00px;width:1.00px;height:28.00px;background:#555555;"></div>
<div class="r" style="left:1489.00px;top:1676.20px;width:168.50px;height:35.50px;background:#4cb2e6;border-radius:6px;"></div>
<div class="t" style="left:1499.61px;top:1695.84px;font-size:21.51px;color:#111111;transform:scaleX(0.9600);">Sources &amp; Uses</div>
<div class="r" style="left:1664.00px;top:1680.00px;width:1.00px;height:28.00px;background:#555555;"></div>
<div class="r" style="left:1670.90px;top:1676.20px;width:82.80px;height:35.50px;background:#4cb2e6;border-radius:6px;"></div>
<div class="t" style="left:1683.06px;top:1695.84px;font-size:21.51px;color:#111111;transform:scaleX(0.9600);">Ratios</div>
<div class="r" style="left:1760.20px;top:1680.00px;width:1.00px;height:28.00px;background:#555555;"></div>
<div class="r" style="left:1767.00px;top:1676.20px;width:95.40px;height:35.50px;background:#4cb2e6;border-radius:6px;"></div>
<div class="t" style="left:1779.99px;top:1695.84px;font-size:21.51px;color:#111111;transform:scaleX(0.9600);">DuPont</div>
<div class="r" style="left:1868.90px;top:1680.00px;width:1.00px;height:28.00px;background:#555555;"></div>
<div class="r" style="left:2033.00px;top:1680.00px;width:1.00px;height:28.00px;background:#555555;"></div>
<div class="r" style="left:2040.30px;top:1676.20px;width:31.70px;height:35.50px;background:#4cb2e6;border-radius:6px;border-top-right-radius:0;border-bottom-right-radius:0;"></div>
<div class="r" style="left:2040.3px;top:1676.2px;width:31.7px;height:35.5px;overflow:hidden;border-radius:6px 0 0 6px;"><div class="t" style="left:13.5px;top:19.65px;font-size:21.5px;color:#111;">To</div></div>
<svg class="s" style="left:40.00px;top:1682.00px;" width="22.00" height="22.00" viewBox="40.00 1682.00 22.00 22.00"><path d="M55 1686.5 L47 1693.5 L55 1700.5" fill="none" stroke="#e0e0e0" stroke-width="1.6"/></svg>
<svg class="s" style="left:90.00px;top:1682.00px;" width="20.00" height="22.00" viewBox="90.00 1682.00 20.00 22.00"><path d="M95.5 1686.5 L103.5 1693.5 L95.5 1700.5" fill="none" stroke="#e0e0e0" stroke-width="1.6"/></svg>
<div class="r" style="left:137.50px;top:1690.50px;width:4.60px;height:4.60px;background:#d8d8d8;border-radius:2.3px;"></div>
<div class="r" style="left:144.10px;top:1690.50px;width:4.60px;height:4.60px;background:#d8d8d8;border-radius:2.3px;"></div>
<div class="r" style="left:150.70px;top:1690.50px;width:4.60px;height:4.60px;background:#d8d8d8;border-radius:2.3px;"></div>
<div class="r" style="left:2086.90px;top:1690.10px;width:5.00px;height:5.00px;background:#e0e0e0;border-radius:2.5px;"></div>
<div class="r" style="left:2093.10px;top:1690.10px;width:5.00px;height:5.00px;background:#e0e0e0;border-radius:2.5px;"></div>
<div class="r" style="left:2099.30px;top:1690.10px;width:5.00px;height:5.00px;background:#e0e0e0;border-radius:2.5px;"></div>
<div class="r" style="left:2134.90px;top:1691.60px;width:17.10px;height:1.60px;background:#e6e6e6;"></div>
<div class="r" style="left:2142.70px;top:1684.00px;width:1.60px;height:16.80px;background:#e6e6e6;"></div>
<div class="r" style="left:2190.50px;top:1686.90px;width:3.20px;height:3.20px;background:#e6e6e6;"></div>
<div class="r" style="left:2190.50px;top:1693.20px;width:3.20px;height:3.20px;background:#e6e6e6;"></div>
<div class="r" style="left:2190.50px;top:1699.40px;width:3.20px;height:3.20px;background:#e6e6e6;"></div>
<div class="r" style="left:2216.40px;top:1680.50px;width:643.30px;height:25.20px;background:#1a1a1a;border-radius:12.5px;"></div>
<svg class="s" style="left:2218.00px;top:1682.00px;" width="22.00" height="22.00" viewBox="2218.00 1682.00 22.00 22.00"><path d="M2233.7 1687.3 L2224 1693.2 L2233.7 1699 Z" fill="#9a9a9a" stroke="#9a9a9a" stroke-width="1.5" stroke-linejoin="round"/></svg>
<div class="r" style="left:2241.60px;top:1686.60px;width:508.40px;height:12.20px;background:#9a9a9a;border-radius:6.1px;"></div>
<svg class="s" style="left:2836.00px;top:1682.00px;" width="22.00" height="22.00" viewBox="2836.00 1682.00 22.00 22.00"><path d="M2841.4 1687.3 L2851.6 1693.2 L2841.4 1699 Z" fill="#9a9a9a" stroke="#9a9a9a" stroke-width="1.5" stroke-linejoin="round"/></svg>
<div class="r" style="left:11.00px;top:1717.40px;width:2880.00px;height:1.20px;background:#2a2a2a;"></div>
<div class="r" style="left:11.00px;top:1718.60px;width:2880.00px;height:32.20px;background:#151515;"></div>
<div class="t" style="left:26.00px;top:1735.45px;font-size:18.31px;color:#e6e6e6;transform:scaleX(0.8161);">Ready</div>
<svg class="s" style="left:96.00px;top:1723.00px;" width="28.00" height="25.00" viewBox="96.00 1723.00 28.00 25.00"><rect x="99.5" y="1726.8" width="20.5" height="17.5" fill="none" stroke="#e0e0e0" stroke-width="1.5"/>
      <path d="M99.5 1730.5 H120" stroke="#e0e0e0" stroke-width="1.3"/>
      <path d="M102.5 1734 H107 M102.5 1737.5 H106 M102.5 1741 H106" stroke="#e0e0e0" stroke-width="1.3"/>
      <circle cx="114" cy="1739.5" r="5.7" fill="#151515" stroke="#e0e0e0" stroke-width="1.5"/><circle cx="114" cy="1739.5" r="2.6" fill="#e0e0e0"/></svg>
<svg class="s" style="left:143.00px;top:1722.00px;" width="27.00" height="26.00" viewBox="143.00 1722.00 27.00 26.00"><circle cx="156" cy="1726.5" r="2.3" fill="none" stroke="#e6e6e6" stroke-width="1.4"/>
      <path d="M147 1731.5 Q152 1733 156 1733 Q160 1733 165 1731.5 M156 1733 V1738 L151.5 1745.5 M156 1738 L158 1741" fill="none" stroke="#e6e6e6" stroke-width="1.4"/>
      <path d="M159.5 1738.5 L167 1745.8 M167 1738.5 L159.5 1745.8" stroke="#e6e6e6" stroke-width="1.4"/></svg>
<div class="t" style="left:173.21px;top:1735.05px;font-size:17.15px;color:#f0f0f0;font-weight:bold;transform:scaleX(0.9170);">Accessibility: Investigate</div>
<div class="r" style="left:2445.00px;top:1718.60px;width:59.70px;height:32.20px;background:#262626;"></div>
<svg class="s" style="left:2460.00px;top:1722.00px;" width="30.00" height="25.00" viewBox="2460.00 1722.00 30.00 25.00"><rect x="2465" y="1725.5" width="19.5" height="17.5" fill="none" stroke="#e0e0e0" stroke-width="1.5"/><path d="M2471.5 1725.5 V1743 M2478 1725.5 V1743 M2465 1731.3 H2484.5 M2465 1737.2 H2484.5" stroke="#e0e0e0" stroke-width="1.3"/></svg>
<svg class="s" style="left:2520.00px;top:1722.00px;" width="30.00" height="25.00" viewBox="2520.00 1722.00 30.00 25.00"><rect x="2524.8" y="1725.5" width="20.5" height="17.5" fill="none" stroke="#e0e0e0" stroke-width="1.5"/><rect x="2528.5" y="1729" width="13" height="10.5" fill="none" stroke="#e0e0e0" stroke-width="1.3"/><path d="M2531 1732 H2539 M2531 1735 H2539" stroke="#e0e0e0" stroke-width="1.1"/></svg>
<svg class="s" style="left:2580.00px;top:1722.00px;" width="30.00" height="25.00" viewBox="2580.00 1722.00 30.00 25.00"><path d="M2584.6 1743 V1725.5 H2605 V1743 Z M2584.6 1734.5 H2595 V1725.5" fill="none" stroke="#e0e0e0" stroke-width="1.5"/></svg>
<div class="r" style="left:2633.20px;top:1733.40px;width:11.00px;height:1.50px;background:#e0e0e0;"></div>
<div class="r" style="left:2653.00px;top:1733.40px;width:147.80px;height:1.50px;background:#bdbdbd;"></div>
<div class="r" style="left:2727.00px;top:1729.00px;width:1.60px;height:10.50px;background:#bdbdbd;"></div>
<div class="r" style="left:2731.60px;top:1725.30px;width:9.40px;height:17.80px;background:#bdbdbd;"></div>
<div class="r" style="left:2809.00px;top:1733.40px;width:11.00px;height:1.50px;background:#e0e0e0;"></div>
<div class="r" style="left:2813.70px;top:1728.80px;width:1.60px;height:10.80px;background:#e0e0e0;"></div>
<div class="t" style="left:2839.04px;top:1734.66px;font-size:16.28px;color:#e6e6e6;transform:scaleX(0.9477);">140%</div>
</body></html>
